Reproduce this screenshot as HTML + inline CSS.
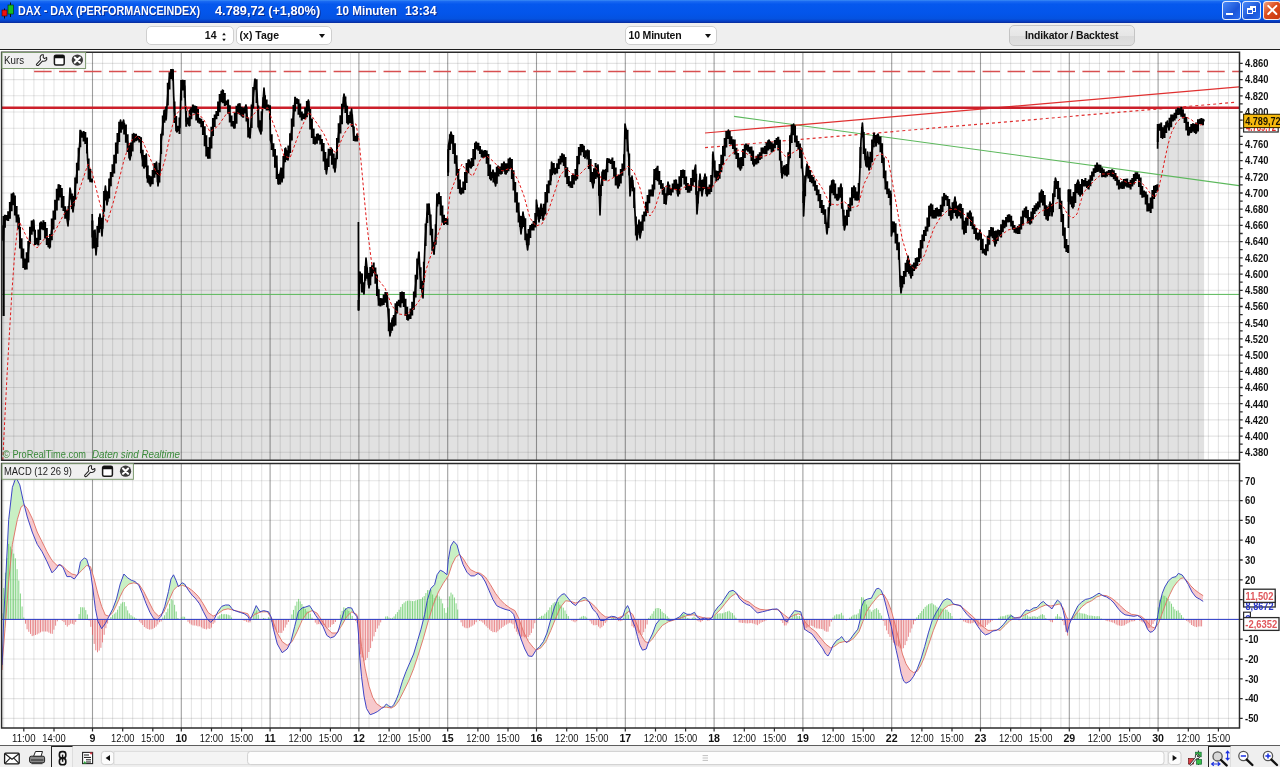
<!DOCTYPE html>
<html lang="de"><head><meta charset="utf-8"><title>DAX - DAX (PERFORMANCEINDEX)</title>
<style>
html,body{margin:0;padding:0;}
body{width:1280px;height:767px;overflow:hidden;background:#fff;position:relative;font-family:"Liberation Sans",Arial,sans-serif;}
#title{will-change:transform;position:absolute;left:0;top:0;width:1280px;height:22.7px;background:linear-gradient(#3b8df6 0,#1a6af2 6%,#0558ee 18%,#0355ea 60%,#0452e0 82%,#063cc0 93%,#0a2a98 100%);}
#title span{position:absolute;top:2.5px;color:#fff;font-weight:bold;font-size:12.4px;line-height:16px;white-space:nowrap;text-shadow:1px 1px 0 #0a2a90;transform-origin:0 50%;}
.wb{position:absolute;top:1.2px;width:18.4px;height:18.5px;border-radius:3.5px;border:1.1px solid rgba(255,255,255,.88);box-sizing:border-box;background:linear-gradient(135deg,#4a8af8,#1c55d8 60%,#2a6cf0);}
#tool{position:absolute;left:0;top:22.7px;width:1280px;height:26.1px;background:#efefef;}
#tline{position:absolute;left:0;top:48.7px;width:1280px;height:1.5px;background:#1c1c1c;}
.fld{will-change:transform;position:absolute;top:26px;height:19.4px;box-sizing:border-box;border:1px solid #cfcfcf;border-radius:5px;background:#fff;font-weight:bold;font-size:10.5px;line-height:17.5px;color:#111;white-space:nowrap;}
.fld i{position:absolute;width:0;height:0;border-left:3.6px solid transparent;border-right:3.6px solid transparent;border-top:4.4px solid #111;top:7px;}
#btn{will-change:transform;position:absolute;left:1009px;top:25px;width:125.5px;height:21.4px;box-sizing:border-box;border:1px solid #c4c4c4;border-radius:5px;background:linear-gradient(#ececec 0,#e6e6e6 50%,#dadada 52%,#e0e0e0 100%);font-weight:bold;font-size:10.4px;letter-spacing:-0.13px;line-height:19px;text-align:center;color:#111;}
#bot{position:absolute;left:0;top:745.2px;width:1280px;height:21.8px;background:#efefef;border-top:1.5px solid #5e5e5e;box-sizing:border-box;}
.pressed{position:absolute;top:746px;height:21px;box-sizing:border-box;border-left:1.6px solid #222;border-top:1.6px solid #222;border-right:1px solid #ddd;background:#f2f2f2;}
</style></head><body>
<div id="title">
<svg width="18" height="22" style="position:absolute;left:0;top:0"><path d="M4.5 8.5v10M10.5 2.5v14.5" stroke="#111" stroke-width="1"/><rect x="2" y="10" width="5" height="6" fill="#f01010" stroke="#400" stroke-width=".6"/><rect x="8" y="5" width="5.4" height="9" fill="#18c020" stroke="#030" stroke-width=".6"/></svg>
<span id="t1" style="left:18px;transform:scaleX(0.8668)">DAX - DAX (PERFORMANCEINDEX)</span>
<span id="t2" style="left:214.8px;transform:scaleX(1.0283)">4.789,72 (+1,80%)</span>
<span id="t3" style="left:336.3px;transform:scaleX(0.9410)">10 Minuten</span>
<span id="t4" style="left:405.3px;transform:scaleX(0.9937)">13:34</span>
<div class="wb" style="left:1222.2px"><div style="position:absolute;left:3px;top:10.4px;width:7px;height:2.7px;background:#fff"></div></div>
<div class="wb" style="left:1242.2px"><div style="position:absolute;left:6.8px;top:3.4px;width:6.2px;height:6.2px;border:1.2px solid #fff;border-top-width:2px;box-sizing:border-box"></div><div style="position:absolute;left:3.7px;top:6.2px;width:6.4px;height:6px;border:1.2px solid #fff;border-top-width:2px;box-sizing:border-box;background:#2a5fe0"></div></div>
<div class="wb" style="left:1262.8px;background:linear-gradient(135deg,#f0a080,#dc4c1c 45%,#c83810)"><svg width="17" height="17" style="position:absolute;left:0;top:0"><path d="M4.2 3.9L12.4 12M12.4 3.9L4.2 12" stroke="#fff" stroke-width="2" stroke-linecap="round"/></svg></div>
</div>
<div id="tool"></div>
<div class="fld" style="left:146.3px;width:88px"><span style="position:absolute;right:16.5px;top:0">14</span><svg width="8" height="14" style="position:absolute;right:5.5px;top:2.5px"><path d="M2.2 5.2L4 2.8L5.8 5.2zM2.2 8.8L4 11.2L5.8 8.8z" fill="#111"/></svg></div>
<div class="fld" style="left:235.7px;width:95.5px"><span style="position:absolute;left:2.6px;top:0">(x) Tage</span><i style="left:82px"></i></div>
<div class="fld" style="left:624.5px;width:92px"><span style="position:absolute;left:2.6px;top:0;letter-spacing:-0.2px">10 Minuten</span><i style="left:78.5px"></i></div>
<div id="btn">Indikator / Backtest</div>
<div id="tline"></div>
<svg width="1280" height="767" viewBox="0 0 1280 767" style="position:absolute;left:0;top:0;will-change:transform"><path d="M3 460.2 L3 240 L4 218 L9 218 L11 204 L13.4 193 L15 206 L17 220 L19 218 L20 240 L23 256 L25 269 L28 256 L30 234 L33.6 220 L35 240 L38 244 L41 222 L45 228 L47 240 L49.6 248 L52.4 224 L55 212 L59 185 L61 190 L63 206 L66 212 L68 226 L70 188 L73 212 L76 180 L78.5 160 L80.6 131 L84.5 136.7 L86.9 141.4 L87.6 160 L90 180 L92 180 L92.2 214 L92.6 248 L95 230 L96 255 L98 230 L100 214 L102 236 L104 202 L105.4 186 L107 205 L109 190 L111 175 L113 172 L115.8 153.9 L118.9 135 L120.5 120 L122 129 L123.6 120 L125.2 132 L127.5 141.4 L130 160 L133.8 133.5 L136 138 L140.8 138 L141.6 154 L144 168 L146.3 154 L147 178 L148.7 176 L150.4 186 L154 172 L156.5 162 L158 186 L160 170 L161.2 141.4 L164.3 110 L166 120 L168.2 88.2 L169.8 75.6 L172.9 69.7 L173.7 96 L174.5 111.6 L176.8 132 L180 127.3 L180.8 92.9 L182.8 80.3 L184.7 86.6 L185.4 105.4 L186.2 121 L189.4 125.7 L190 110 L196 108 L198 120 L202 122 L205 136 L208 158 L211 140 L214 120 L218 112 L220 100 L222.6 90 L225 104 L228 102 L230 118 L234 128 L237 110 L239 104 L242 116 L246 105 L248 126 L250 138 L252 110 L255 79 L257 94 L259 128 L261 134 L262.4 110 L264 88 L265.6 108 L268 108 L270 109 L270.4 140 L273 148 L276 160 L278.4 184 L281 168 L282 182 L284 160 L285.6 148 L288 160 L290 144 L292 128 L294 110 L295 100 L298 100 L300 114 L305 118 L308.4 100 L310 118 L312 130 L315 144 L318 134 L322 144 L324.4 154 L326.4 174 L329 152 L331 148 L333 160 L335 172 L337 148 L339 130 L342 116 L344 94 L346 106 L348 124 L350 120 L351.6 109 L353 126 L354 140 L357 138 L358 136 L358.4 222 L358.6 310 L360 272 L364 294 L366 258 L369 288 L372 266 L375 270 L377 284 L379 304 L383 301 L387 294 L388 310 L390 336 L392.4 318 L394 326 L397 302 L400 306 L402 292 L405 304 L408 320 L411 314 L414 302 L416 282 L419 252 L420 274 L423 298 L424 270 L425 244 L427 214 L429 204 L431 230 L434 254 L436 230 L437 194 L440 198 L442 214 L444 222 L447.6 222 L448 176 L448.4 146 L451 132 L454 148 L456 160 L458 178 L461 194 L464 188 L466 176 L469 160 L471 168 L474 156 L476 142 L479 148 L482 154 L487 154 L489 170 L491 180 L493 170 L495.6 186 L498 166 L501 174 L504 162 L506 174 L510 158 L512 170 L514 184 L517 204 L519 214 L521 234 L523 212 L525 228 L527.6 250 L530 228 L534 226 L536 224 L536.4 200 L539 222 L541 204 L543 220 L546 200 L548 186 L551 180 L551.6 162 L555 174 L558 166 L561 158 L564 156 L566 172 L569 184 L572 186 L573 174 L576 180 L578 160 L580 148 L583 146 L585 158 L587.6 150 L590 166 L593 188 L595 170 L598 165 L599 184 L600 215 L601 186 L603 170 L606 180 L607 160 L610 162 L612 160 L615 172 L618 188 L621 174 L623 168 L624 170 L625 124 L627 136 L629 160 L630 196 L632 176 L634 194 L635.6 224 L637 240 L639 220 L640 238 L643 218 L646 212 L648 200 L651 190 L653 196 L655 170 L657 168 L659 180 L662 186 L664 192 L666 204 L668 182 L670 194 L673 188 L676 180 L678 196 L681 176 L683 170 L685 180 L688 190 L690 190 L693 178 L695.6 165 L697 214 L699 188 L700 174 L702 196 L705 174 L707 196 L710 188 L712 186 L713 152 L715 176 L718 178 L721 166 L724 150 L726 140 L728.4 130 L731 144 L733 140 L735 150 L738 158 L740.4 170 L743 158 L746 144 L748 150 L751 148 L754 166 L757 158 L760 158 L763 148 L766 152 L769 140 L772 150 L775 144 L778 138 L780 150 L782 178 L784 166 L787 176 L789 158 L791 136 L793.6 124 L795 136 L798 146 L801 148 L803 176 L803.6 216 L805 186 L807 164 L810 178 L813 180 L816 188 L819 196 L822 208 L825 212 L827 234 L829 212 L831 186 L833 180 L835 194 L838 200 L841 184 L843 212 L844.4 230 L847 216 L850 206 L852 198 L854 186 L857 200 L859 192 L860 168 L861 140 L862.4 123 L864 146 L866 166 L867.6 152 L869 170 L871 160 L873 144 L874 133 L876 146 L878 134 L880 142 L882 150 L884 170 L886 186 L889 194 L891 194 L891.4 236 L894 222 L896 238 L899 250 L900 278 L901 293 L903 278 L905 274 L907 266 L908 256 L911 278 L913 266 L916 264 L919 258 L921 246 L923 238 L926 230 L928 226 L930 208 L931 204 L934 218 L937 208 L939 216 L942 208 L944.4 195 L947 198 L950 208 L951 220 L953 210 L955 197 L957 218 L960 204 L962 212 L964 234 L967 220 L970 211 L972 224 L975 230 L978 240 L980 230 L982 248 L985 254 L988 244 L990 232 L993 228 L995 246 L998 230 L1000 236 L1003 224 L1006 222 L1009 215 L1012 224 L1015 230 L1018 232 L1021 226 L1023 216 L1025.6 208 L1028 218 L1030 224 L1033 212 L1036 208 L1039 206 L1041.6 190 L1044 200 L1046 214 L1047.6 220 L1050 202 L1052 216 L1054 194 L1055.4 178 L1058 188 L1060 200 L1062 216 L1064 234 L1066 248 L1068 250 L1068.4 228 L1068.6 190 L1071 200 L1073 208 L1075 194 L1078 180 L1080 196 L1082 184 L1085 181 L1088 188 L1090 181 L1093.3 173 L1096.5 167 L1099.8 166 L1101.4 171.6 L1104.7 174.8 L1107.9 173.2 L1111.2 172.4 L1114.4 174.8 L1116.9 179.7 L1120.1 187.9 L1123.4 183.8 L1126.7 181.4 L1129.1 187.1 L1132.4 181.4 L1134.8 178.1 L1137.2 174.8 L1139.7 179.7 L1141.3 191.1 L1143 196 L1145.4 192.8 L1147 202.5 L1149 210.7 L1151.1 207.4 L1152.7 196 L1154.4 188.7 L1157.1 187.9 L1157.6 148.8 L1157.8 130 L1159.2 124.3 L1161.7 127.6 L1162.5 138.2 L1165 130.8 L1167.4 121 L1169 130 L1170.7 119.4 L1172.3 116.2 L1174.7 117.8 L1176.4 112.9 L1178.8 109.7 L1181.2 111.3 L1183.7 115.4 L1185.3 119.4 L1186.9 124.3 L1188.9 134.9 L1191 127.6 L1193.5 126.8 L1195.9 133.3 L1197.5 124.3 L1200 119.4 L1202.4 124.3 L1204.1 119.4 L1204.1 460.2Z" fill="#e1e1e1"/>
<path d="M84.1 52.3V460.2M74.1 52.3V460.2M64 52.3V460.2M54 52.3V460.2M43.9 52.3V460.2M33.9 52.3V460.2M23.8 52.3V460.2M13.8 52.3V460.2M3.7 52.3V460.2M102.6 52.3V460.2M112.6 52.3V460.2M122.7 52.3V460.2M132.7 52.3V460.2M142.8 52.3V460.2M152.8 52.3V460.2M162.9 52.3V460.2M172.9 52.3V460.2M191.4 52.3V460.2M201.4 52.3V460.2M211.5 52.3V460.2M221.5 52.3V460.2M231.6 52.3V460.2M241.6 52.3V460.2M251.7 52.3V460.2M261.7 52.3V460.2M280.2 52.3V460.2M290.2 52.3V460.2M300.3 52.3V460.2M310.3 52.3V460.2M320.4 52.3V460.2M330.4 52.3V460.2M340.5 52.3V460.2M350.5 52.3V460.2M369 52.3V460.2M379 52.3V460.2M389.1 52.3V460.2M399.1 52.3V460.2M409.2 52.3V460.2M419.2 52.3V460.2M429.3 52.3V460.2M439.3 52.3V460.2M457.8 52.3V460.2M467.8 52.3V460.2M477.9 52.3V460.2M487.9 52.3V460.2M498 52.3V460.2M508 52.3V460.2M518.1 52.3V460.2M528.1 52.3V460.2M546.6 52.3V460.2M556.6 52.3V460.2M566.7 52.3V460.2M576.7 52.3V460.2M586.8 52.3V460.2M596.8 52.3V460.2M606.9 52.3V460.2M616.9 52.3V460.2M635.4 52.3V460.2M645.4 52.3V460.2M655.5 52.3V460.2M665.5 52.3V460.2M675.6 52.3V460.2M685.6 52.3V460.2M695.7 52.3V460.2M705.7 52.3V460.2M724.2 52.3V460.2M734.2 52.3V460.2M744.3 52.3V460.2M754.3 52.3V460.2M764.4 52.3V460.2M774.4 52.3V460.2M784.5 52.3V460.2M794.5 52.3V460.2M813 52.3V460.2M823 52.3V460.2M833.1 52.3V460.2M843.1 52.3V460.2M853.2 52.3V460.2M863.2 52.3V460.2M873.3 52.3V460.2M883.3 52.3V460.2M901.8 52.3V460.2M911.8 52.3V460.2M921.9 52.3V460.2M931.9 52.3V460.2M942 52.3V460.2M952 52.3V460.2M962.1 52.3V460.2M972.1 52.3V460.2M990.6 52.3V460.2M1000.6 52.3V460.2M1010.7 52.3V460.2M1020.7 52.3V460.2M1030.8 52.3V460.2M1040.8 52.3V460.2M1050.9 52.3V460.2M1060.9 52.3V460.2M1079.4 52.3V460.2M1089.4 52.3V460.2M1099.5 52.3V460.2M1109.5 52.3V460.2M1119.6 52.3V460.2M1129.6 52.3V460.2M1139.7 52.3V460.2M1149.7 52.3V460.2M1168.2 52.3V460.2M1178.2 52.3V460.2M1188.3 52.3V460.2M1198.3 52.3V460.2M1208.4 52.3V460.2M1218.4 52.3V460.2M1228.5 52.3V460.2" stroke="#000" stroke-opacity="0.105" stroke-width="1.1" fill="none"/><path d="M92.5 52.3V460.2M181.3 52.3V460.2M270.1 52.3V460.2M358.9 52.3V460.2M447.7 52.3V460.2M536.5 52.3V460.2M625.3 52.3V460.2M714.1 52.3V460.2M802.9 52.3V460.2M891.7 52.3V460.2M980.5 52.3V460.2M1069.3 52.3V460.2M1158.1 52.3V460.2" stroke="#000" stroke-opacity="0.38" stroke-width="1.1" fill="none"/>
<path d="M84.1 463.4V728M74.1 463.4V728M64 463.4V728M54 463.4V728M43.9 463.4V728M33.9 463.4V728M23.8 463.4V728M13.8 463.4V728M3.7 463.4V728M102.6 463.4V728M112.6 463.4V728M122.7 463.4V728M132.7 463.4V728M142.8 463.4V728M152.8 463.4V728M162.9 463.4V728M172.9 463.4V728M191.4 463.4V728M201.4 463.4V728M211.5 463.4V728M221.5 463.4V728M231.6 463.4V728M241.6 463.4V728M251.7 463.4V728M261.7 463.4V728M280.2 463.4V728M290.2 463.4V728M300.3 463.4V728M310.3 463.4V728M320.4 463.4V728M330.4 463.4V728M340.5 463.4V728M350.5 463.4V728M369 463.4V728M379 463.4V728M389.1 463.4V728M399.1 463.4V728M409.2 463.4V728M419.2 463.4V728M429.3 463.4V728M439.3 463.4V728M457.8 463.4V728M467.8 463.4V728M477.9 463.4V728M487.9 463.4V728M498 463.4V728M508 463.4V728M518.1 463.4V728M528.1 463.4V728M546.6 463.4V728M556.6 463.4V728M566.7 463.4V728M576.7 463.4V728M586.8 463.4V728M596.8 463.4V728M606.9 463.4V728M616.9 463.4V728M635.4 463.4V728M645.4 463.4V728M655.5 463.4V728M665.5 463.4V728M675.6 463.4V728M685.6 463.4V728M695.7 463.4V728M705.7 463.4V728M724.2 463.4V728M734.2 463.4V728M744.3 463.4V728M754.3 463.4V728M764.4 463.4V728M774.4 463.4V728M784.5 463.4V728M794.5 463.4V728M813 463.4V728M823 463.4V728M833.1 463.4V728M843.1 463.4V728M853.2 463.4V728M863.2 463.4V728M873.3 463.4V728M883.3 463.4V728M901.8 463.4V728M911.8 463.4V728M921.9 463.4V728M931.9 463.4V728M942 463.4V728M952 463.4V728M962.1 463.4V728M972.1 463.4V728M990.6 463.4V728M1000.6 463.4V728M1010.7 463.4V728M1020.7 463.4V728M1030.8 463.4V728M1040.8 463.4V728M1050.9 463.4V728M1060.9 463.4V728M1079.4 463.4V728M1089.4 463.4V728M1099.5 463.4V728M1109.5 463.4V728M1119.6 463.4V728M1129.6 463.4V728M1139.7 463.4V728M1149.7 463.4V728M1168.2 463.4V728M1178.2 463.4V728M1188.3 463.4V728M1198.3 463.4V728M1208.4 463.4V728M1218.4 463.4V728M1228.5 463.4V728" stroke="#000" stroke-opacity="0.105" stroke-width="1.1" fill="none"/><path d="M92.5 463.4V728M181.3 463.4V728M270.1 463.4V728M358.9 463.4V728M447.7 463.4V728M536.5 463.4V728M625.3 463.4V728M714.1 463.4V728M802.9 463.4V728M891.7 463.4V728M980.5 463.4V728M1069.3 463.4V728M1158.1 463.4V728" stroke="#000" stroke-opacity="0.38" stroke-width="1.1" fill="none"/>
<path d="M1.6 452.3H1239.5M1.6 436.1H1239.5M1.6 419.9H1239.5M1.6 403.7H1239.5M1.6 387.5H1239.5M1.6 371.3H1239.5M1.6 355.1H1239.5M1.6 338.9H1239.5M1.6 322.7H1239.5M1.6 306.5H1239.5M1.6 290.3H1239.5M1.6 274.1H1239.5M1.6 257.8H1239.5M1.6 241.6H1239.5M1.6 225.4H1239.5M1.6 209.2H1239.5M1.6 193H1239.5M1.6 176.8H1239.5M1.6 160.6H1239.5M1.6 144.4H1239.5M1.6 128.2H1239.5M1.6 112H1239.5M1.6 95.8H1239.5M1.6 79.6H1239.5M1.6 63.4H1239.5" stroke="#000" stroke-opacity="0.105" stroke-width="1.1" fill="none"/>
<path d="M1.6 718.4H1239.5M1.6 698.6H1239.5M1.6 678.8H1239.5M1.6 659H1239.5M1.6 639.2H1239.5M1.6 619.4H1239.5M1.6 599.6H1239.5M1.6 579.8H1239.5M1.6 560H1239.5M1.6 540.2H1239.5M1.6 520.4H1239.5M1.6 500.6H1239.5M1.6 480.8H1239.5" stroke="#000" stroke-opacity="0.105" stroke-width="1.1" fill="none"/>
<path d="M1.6 294.4H1239.5" stroke="#58b858" stroke-width="1"/>
<path d="M34.1 71.5H1239.5" stroke="#d84f50" stroke-width="1.3" stroke-dasharray="17.5 7.46"/>
<path d="M734 116.4L1239 185.6" stroke="#5cb85c" stroke-width="1.1"/>
<path d="M705 133L1239 86.8" stroke="#e03030" stroke-width="1.2"/>
<path d="M705 147.6L1237 102.2" stroke="#e03030" stroke-width="1.2" stroke-dasharray="3 3"/>
<path d="M1.6 107.7H1239.5" stroke="#cc1f2a" stroke-width="2.4"/>
<path d="M3.2 225.2V240.7M4.9 214.8V227.8M6.6 215.1V220.5M8.2 211.2V220.9M9.9 202V218.7M11.6 193.4V211.2M13.3 193.3V205.3M14.9 195.5V215.6M16.6 206.1V222.4M18.3 214.5V229.3M20 227V248.5M21.6 238.3V258.5M23.3 248.6V267.9M25 258.5V269.3M26.7 252.2V269.6M28.3 241.1V262.5M30 226.8V243.7M31.7 220.5V234.7M33.4 220.5V231.6M35 229.7V244.9M36.7 237.8V244.6M38.4 229.6V245.4M40.1 222.4V239.9M41.7 222.7V229.6M43.4 220.2V230.3M45.1 222.1V238.4M46.8 227.9V245.1M48.4 237.9V247.2M50.1 233.9V247.5M51.8 218.4V240.3M53.5 210.4V229.5M55.1 199.7V219.8M56.8 188.7V210.5M58.5 184.3V200.4M60.2 185.1V197.4M61.8 187.9V207.7M63.5 196V211.1M65.2 206.3V218.8M66.9 209.7V218.5M68.5 206V220.3M70.2 189.4V199.6M71.9 193.4V208.9M73.6 196V206.3M75.2 177.5V199.8M76.9 162.8V183.4M78.6 147.7V170.5M80.3 129.8V147.3M81.9 132.6V137.7M83.6 131V141.5M85.3 132V144.1M87 137.6V153.5M88.6 158.6V179.6M90.3 168.9V182.3M92 178.4V182.6M92.4 220.5V237.6M94.1 230.3V248.3M95.8 237.9V249.2M97.4 225.9V246.9M99.1 217.3V232.7M100.8 217.7V229M102.5 217.7V228.7M104.1 190.9V211.7M105.8 190.4V200.6M107.5 191.3V201.8M109.2 178.4V198.6M110.8 172V186.3M112.5 164.2V177M114.2 154.7V173.4M115.9 142.6V163.5M117.5 133.1V153.8M119.2 121.8V142M120.9 121.9V132.8M122.6 121.6V128.7M124.2 122.9V134.6M125.9 124.4V142.7M127.6 134.2V152M129.3 144.8V158.5M130.9 142.6V156.3M132.6 133.8V151.5M134.3 134.1V142.5M136 133.8V141.3M137.6 135.7V140.5M139.3 136V142.5M141 137.3V153.3M142.7 149.8V166.6M144.3 155V166.3M146 155.3V167.3M147.7 165.5V182.8M149.4 175.6V184.2M151 176.3V183.9M152.7 170.1V184.2M154.4 163V177.7M156.1 163.3V174.4M157.7 170V182.3M159.4 162.7V182.6M161.1 133.8V154.1M162.8 115.4V135.6M164.4 110.5V122.7M166.1 106.6V118.7M167.8 82.8V105.6M169.5 72.3V89.4M171.1 69.1V78.9M172.8 69.4V80.6M174.5 101.5V123.1M176.2 116V131.2M177.8 125.7V130.9M179.5 117.4V133.9M181.2 79.9V100.4M182.9 80.2V90.4M184.6 79.9V97.7M186.2 111.1V126.7M187.9 117.5V123.9M189.6 110.6V126M191.3 107.2V119.2M192.9 104.5V112.7M194.6 105.5V113.4M196.3 106V120.4M198 109V122.7M199.6 117.7V123.8M201.3 118.8V127.3M203 121V135.1M204.7 126.2V146.3M206.3 135.3V156.5M208 146.9V158.4M209.7 137.3V158.7M211.4 126.8V148.5M213 117.9V136.1M214.7 114.5V126.9M216.4 110.9V119.3M218.1 101.6V115.9M219.7 93.9V112.3M221.4 90.8V102.3M223.1 89.9V103.3M224.8 92.9V106M226.4 100.5V105.3M228.1 99.4V113.8M229.8 105.3V122.4M231.5 115.6V126.5M233.1 121V126.2M234.8 112.4V128.6M236.5 105.8V123.8M238.2 103.7V113.8M239.8 103.3V114.8M241.5 106.7V116.3M243.2 107.4V117.8M244.9 107.7V113.4M246.5 106.7V121.4M248.2 117.5V137.5M249.9 127.6V137.8M251.6 104.5V127.9M253.2 87.1V108.5M254.9 79.4V89.8M256.6 79.2V103M258.3 105.5V127.6M259.9 120.2V131.2M261.6 111.3V131.5M263.3 97.3V108.3M265 95.3V108.7M266.6 99.6V110.5M268.3 104.6V110.5M270 105.3V119.7M271.7 134.3V150.1M273.4 143.2V156.8M275 149V167.7M276.7 155.4V179M278.4 173.9V184.2M280.1 173.4V184.5M281.7 167.9V178.6M283.4 155.9V178.4M285.1 148.3V162.2M286.8 150.3V159.9M288.4 145.5V157M290.1 133.3V152.9M291.8 118.4V140.4M293.5 105.1V126.8M295.1 96.8V111.6M296.8 98.2V104.1M298.5 99.3V114.8M300.2 103.4V117.6M301.8 111.4V120.5M303.5 113.5V118.9M305.2 107.5V119.2M306.9 101V117.3M308.5 101.1V111.6M310.2 108.9V129.6M311.9 118.6V138M313.6 128.6V143.9M315.2 136.6V143.6M316.9 133.7V143.7M318.6 135.1V140.4M320.3 134.8V144.5M321.9 139V151.2M323.6 143.1V161.4M325.3 152.1V169.9M327 158.6V169.6M328.6 148.7V167.1M330.3 149V155.7M332 148.7V164.7M333.7 153.4V168.6M335.3 158.1V168.3M337 138.1V159.3M338.7 123.2V142.8M340.4 115.3V133.5M342 103.7V124.3M343.7 96.7V107.3M345.4 96.4V113.1M347.1 105.7V123.2M348.7 114.9V122.9M350.4 111.4V123.2M352.1 114.6V127.1M353.8 126.5V141.1M355.4 135.7V141.6M357.1 133.6V141.6M358.6 299.9V310.4M360.3 273.1V283.8M362 273.5V292.6M363.6 282.2V292.3M365.3 266V280.7M367 267.4V278.7M368.7 273.1V284.9M370.3 266.9V285.2M372 265.6V276.4M373.7 262.4V273.2M375.4 267.5V283.7M377 274.6V296M378.7 289.2V305.8M380.4 298V306.6M382.1 298.2V305.6M383.7 294.5V305M385.4 292V302.8M387.1 292.3V307.2M388.8 308.6V331.2M390.4 322.6V333.1M392.1 319.8V330.7M393.8 315.1V325.3M395.5 303.3V325.5M397.1 301.8V313.5M398.8 299.8V306M400.5 291.9V307.5M402.2 292.2V303.3M403.8 291.9V307M405.5 298.7V316.1M407.2 306.7V320M408.9 314.2V318.7M410.5 308.4V319M412.2 301.7V315.6M413.9 291.6V309.8M415.6 274.8V297.5M417.2 258.4V279.4M418.9 252.4V263.1M420.6 267.3V289.1M422.3 281.1V292.5M423.9 261.8V281.9M425.6 223.4V246M427.3 203.5V222.9M429 203.8V214.9M430.6 214.6V235.3M432.3 228.7V250.7M434 241.9V254.4M435.7 224.3V244.7M437.3 194.1V206.5M439 192.2V204.3M440.7 196V215.5M442.4 205.4V222.7M444 214.8V224.9M445.7 218V223.9M447.4 218.3V224.9M448.2 149.2V172.4M449.9 134.2V149.9M451.6 134.5V143.7M453.2 135.1V154.1M454.9 143.2V163.8M456.6 155.2V175.7M458.3 169V189M459.9 179.5V193.5M461.6 187.6V193.2M463.3 181.6V193.5M465 171.9V190.1M466.6 163V182.9M468.3 159.6V173.3M470 161.2V167.8M471.7 158V167.1M473.3 149V166.1M475 142.7V159.4M476.7 143V149.6M478.4 142.7V150.8M480 146V154.1M481.7 149.4V157.5M483.4 150.4V157.9M485.1 150V157M486.7 150.6V163.7M488.4 153.9V176M490.1 164.6V179.2M491.8 172V177.9M493.4 172.3V182.6M495.1 172.2V183.4M496.8 166.7V183.7M498.5 166.8V176.6M500.1 166.5V174.1M501.8 163.3V174.1M503.5 163.6V171.4M505.2 163.3V174.2M506.8 163.2V172.8M508.5 158.5V171.3M510.2 158.8V169.1M511.9 159.1V179M513.5 170.3V190.6M515.2 181.9V202.4M516.9 192.3V212.5M518.6 202.6V222.5M520.2 215.8V226.9M521.9 216.1V228.4M523.6 216.4V227.1M525.3 218.3V240.2M526.9 233.6V244.9M528.6 228.9V245.2M530.3 224.9V238.1M532 223.7V230.4M533.6 221V230.6M535.3 212.9V227.5M537 204.7V216.5M538.7 207.4V219.7M540.4 209.4V219M542 207.7V216M543.7 203.7V215.7M545.4 192.1V214.4M547.1 184.3V202.6M548.7 180.5V193.3M550.4 169.2V185.2M552.1 163.3V175.2M553.8 163V173.6M555.4 167.7V173.3M557.1 163.2V173.6M558.8 158.7V169.1M560.5 155.8V164.6M562.1 153.2V162.4M563.8 154.2V165.9M565.5 157V177.3M567.2 167.2V184M568.8 175.9V186.3M570.5 181.3V187.8M572.2 175V188M573.9 175.3V184.5M575.5 168.9V179.5M577.2 155.9V179.2M578.9 146.9V164.3M580.6 143.9V155.4M582.2 143.9V152.2M583.9 145.8V156.9M585.6 150.3V156.6M587.3 150.6V159.6M588.9 150.3V169M590.6 158.9V182M592.3 171.9V183.2M594 168.2V183.5M595.6 163V179.1M597.3 165.7V177.6M599 173.5V195.8M600.7 184.8V196M602.3 171.6V185.9M604 170.1V179.7M605.7 169V179.4M607.4 158.1V172.3M609 158.5V163.1M610.7 159.5V164.1M612.4 157.5V169M614.1 160.9V176.7M615.7 167.6V185.6M617.4 175.7V185.3M619.1 174.4V186.2M620.8 169V183.6M622.4 163.6V175.8M624.1 154.2V170.2M625.8 128.4V139.3M627.5 129.7V151.6M629.2 153.4V175.6M630.8 177.2V188.1M632.5 180.1V191.2M634.2 187.6V208.1M635.9 216.4V235.4M637.5 224.6V235.1M639.2 223.3V233.3M640.9 221.5V232.5M642.6 214.8V230.7M644.2 211.5V221.6M645.9 201.8V216.2M647.6 195.1V212.9M649.3 189.5V203.2M650.9 189.8V196.5M652.6 184.6V195.2M654.3 168.9V189.6M656 168.6V180M657.6 165.7V181.3M659.3 171.1V184.7M661 179.9V188.7M662.7 183.3V194.7M664.3 187.3V204.1M666 193.2V204.3M667.7 185V195.5M669.4 184.7V195M671 187.9V195.5M672.7 183.6V192.6M674.4 179.8V189.3M676.1 180.1V190.3M677.7 183.8V194.3M679.4 176.3V194.2M681.1 170V186.7M682.8 170.3V177.9M684.4 170V184.4M686.1 176.5V190M687.8 183V192.7M689.5 184.7V192.7M691.1 178V190.7M692.8 169.8V186.1M694.5 170.1V182.2M696.2 173.7V194.8M697.8 191.3V203.4M699.5 180.3V191.2M701.2 180V191.2M702.9 179.4V190M704.5 176.9V189.1M706.2 176.6V194.3M707.9 186.7V194M709.6 184.4V194.3M711.2 175.1V191.9M712.9 154.2V164.4M714.6 160.4V177.6M716.3 170.5V181.6M718 171.1V180.3M719.6 163.9V178.7M721.3 154.8V172.2M723 146V165.1M724.7 137.9V156.2M726.3 131V147.4M728 131.3V139.1M729.7 131V144M731.4 136.2V143.7M733 139.8V149M734.7 139.6V154.4M736.4 147.8V159M738.1 153V167.4M739.7 157.6V168.7M741.4 156.9V168.5M743.1 149.1V166M744.8 144.6V157.9M746.4 144.9V150.6M748.1 144.6V151.8M749.8 146.8V153.7M751.5 146.6V161.1M753.1 150.4V164.5M754.8 158.7V164.2M756.5 155.8V164.5M758.2 154.2V163.2M759.8 152.3V160.1M761.5 147.6V158.7M763.2 147.9V153.7M764.9 146V154.1M766.5 142.4V154.2M768.2 140.3V150.5M769.9 141.3V149.3M771.6 142.3V152.4M773.2 143.5V151.5M774.9 140.1V148.2M776.6 137.9V144.9M778.3 136.7V150.4M779.9 139.8V160.5M781.6 161.1V173.1M783.3 167.3V174.1M785 165.3V175.5M786.6 164V175.2M788.3 152.2V174.7M790 135.2V158.2M791.7 124.5V142.9M793.3 124.8V135.3M795 125.5V142.4M796.7 135.4V146.9M798.4 141V149.7M800 143.6V157.9M801.7 148.2V168.4M803.4 191.3V203.1M805.1 175.5V196.2M806.8 166.3V176.4M808.4 166V178.5M810.1 170V181.9M811.8 175.1V183.2M813.5 176.9V186.4M815.1 180.5V190.8M816.8 185V195.3M818.5 189.4V201.3M820.2 193.9V208M821.8 199.9V213M823.5 205.1V214.7M825.2 209.3V223.9M826.9 222.5V232.8M828.5 207.3V227.9M830.2 185.4V206M831.9 180.2V193.2M833.6 180V195.2M835.2 183.6V198.5M836.9 193.8V200.4M838.6 187.2V199.6M840.3 187.5V197.8M841.9 187.2V208.7M843.6 209.8V225.9M845.3 215.5V225.6M847 209.8V225.4M848.6 204V216.9M850.3 197.6V211.2M852 187.3V205.4M853.7 187.6V198.3M855.3 187.3V200.4M857 191.6V200.3M858.7 183.1V200.6M860.4 146.9V168.1M862 127V137.4M863.7 131.9V153.9M865.4 148.6V160.3M867.1 156.3V167.4M868.7 156.8V167.1M870.4 151.7V167.4M872.1 139.5V162.2M873.8 135.1V147.3M875.4 135V142.8M877.1 134.4V143.1M878.8 136.8V144.6M880.5 136.5V152.2M882.1 143.2V163M883.8 157.5V178.3M885.5 170.5V189.4M887.2 181.3V194.3M888.8 188.4V198M890.5 190.6V205.3M892.2 221.3V232.1M893.9 222.3V232.6M895.6 223.3V243.6M897.2 233.7V250.3M898.9 242.3V259.8M900.6 275.4V287.1M902.3 276V287.4M903.9 270.9V284.3M905.6 262.7V276.8M907.3 260V272M909 259.8V273.8M910.6 265.4V275.7M912.3 264.6V276M914 262.6V270.9M915.7 258.1V268.7M917.3 257.3V265.9M919 248.3V262M920.7 239.9V258.4M922.4 234.5V248.6M924 230.1V241.3M925.7 226.5V235.9M927.4 217.5V231.5M929.1 205.8V226.7M930.7 204.7V216.6M932.4 204.5V218.4M934.1 209.9V218.1M935.8 208.1V218.4M937.4 209.4V216.4M939.1 209.1V216.1M940.8 204.8V216.4M942.5 196.5V211.9M944.1 192.9V206.2M945.8 194.8V200.3M947.5 195.9V205.9M949.2 198.9V216M950.8 207.9V218.5M952.5 202.2V218.7M954.2 201.8V213.1M955.9 201.5V216.2M957.5 205.4V215.9M959.2 204.6V216.2M960.9 204V218.5M962.6 208V229.5M964.2 220.8V233.3M965.9 217.5V232.9M967.6 212.5V225.7M969.3 212.8V218.9M970.9 212.5V225.9M972.6 216.5V229.3M974.3 224.5V233.9M976 227.9V239.5M977.6 232.5V239.2M979.3 233V239.7M981 232.7V250.1M982.7 238.7V253.4M984.4 248.7V253.1M986 244.3V255.4M987.7 235.8V251.3M989.4 229.9V244.8M991.1 226.9V236.4M992.7 228V238.3M994.4 231V242.3M996.1 230.6V243.7M997.8 230.9V240.9M999.4 230.1V234.7M1001.1 224.2V237.4M1002.8 219.7V232.3M1004.5 220.2V228.3M1006.1 217.1V226.7M1007.8 214.8V222.4M1009.5 214.6V222.2M1011.2 215.7V226.4M1012.8 220.8V229.7M1014.5 225V232.8M1016.2 227.5V233.5M1017.9 226V234M1019.5 224.2V234M1021.2 216.6V229.6M1022.9 210.5V225.6M1024.6 208.2V217.3M1026.2 206.6V218.3M1027.9 210V223.5M1029.6 217V223.2M1031.3 211.5V223.5M1032.9 207.9V219.6M1034.6 205.3V213.9M1036.3 203.2V211.3M1038 201.4V209.6M1039.6 192.4V207.4M1041.3 191.3V202.8M1043 191V205.4M1044.7 195.1V216M1046.3 205.2V219.4M1048 206.4V220.5M1049.7 203.9V216.3M1051.4 203.6V212M1053 193.2V212.3M1054.7 181.1V197M1056.4 181.4V189.1M1058.1 181.1V199.2M1059.7 187.7V209M1061.4 200.8V222M1063.1 214.1V235.7M1064.8 227.6V248.3M1066.4 239.1V251.9M1068.1 244.9V252.9M1068.6 189.6V201.8M1070.3 189.3V204.5M1072 196.3V207.3M1073.6 192.1V207M1075.3 184.1V203M1077 182.8V193.3M1078.7 181.6V194.7M1080.3 184V194.4M1082 179.1V194.7M1083.7 180V186.4M1085.4 178V186.4M1087 181.1V188.1M1088.7 179.4V189.4M1090.4 175.3V186.2M1092.1 171.5V180.8M1093.7 168.3V176.7M1095.4 164.8V172.9M1097.1 162.4V172M1098.8 164.5V171.8M1100.4 164.8V173M1102.1 167.5V177.2M1103.8 169.2V177M1105.5 171.7V177.6M1107.1 171.2V176.4M1108.8 170.1V175.1M1110.5 170V176.6M1112.2 169.3V177M1113.8 170.2V179.2M1115.5 172.9V181.1M1117.2 176.3V185.4M1118.9 179.7V189.5M1120.5 182.2V187.8M1122.2 181.2V189.1M1123.9 179.1V188.7M1125.6 178.7V186.5M1127.2 178.6V187.4M1128.9 182V187.1M1130.6 179.8V189.4M1132.3 177.9V186.6M1133.9 173.9V184.5M1135.6 172.2V181M1137.3 172.3V179M1139 174.3V187.1M1140.6 177.6V194.7M1142.3 185.9V197.8M1144 190.6V197.2M1145.7 191.6V204.6M1147.3 194.6V211.4M1149 203.3V211.1M1150.7 197.6V213M1152.4 190V208.7M1154 185.7V199M1155.7 185.1V193M1157.4 184.2V191.1M1157.8 124V142M1159.5 124.3V130.7M1161.2 122.5V137.9M1162.8 127.3V137.6M1164.5 125.3V137.9M1166.2 121.8V133M1167.9 123.1V127.4M1169.5 117.7V127.1M1171.2 114.5V127.3M1172.9 114.4V121.5M1174.6 112.7V120.6M1176.2 109.2V118.4M1177.9 107.8V115M1179.6 108.3V114.7M1181.3 106.8V116.8M1182.9 109.2V118.4M1184.6 113.4V123.1M1186.3 117V130.6M1188 121.7V135.5M1189.6 126.8V132.7M1191.3 124.1V133M1193 123.3V131.8M1194.7 123.8V132.9M1196.3 122.6V133.1M1198 119.3V131.4M1199.7 119.6V124M1201.4 118.1V124.6M1203 118.7V125.3" stroke="#000" stroke-width="2.05" fill="none"/>
<path d="M3 240 L4 218 L9 218 L11 204 L13.4 193 L15 206 L17 220 L19 218 L20 240 L23 256 L25 269 L28 256 L30 234 L33.6 220 L35 240 L38 244 L41 222 L45 228 L47 240 L49.6 248 L52.4 224 L55 212 L59 185 L61 190 L63 206 L66 212 L68 226 L70 188 L73 212 L76 180 L78.5 160 L80.6 131 L84.5 136.7 L86.9 141.4 L87.6 160 L90 180 L92 180 M92.2 214 L92.6 248 L95 230 L96 255 L98 230 L100 214 L102 236 L104 202 L105.4 186 L107 205 L109 190 L111 175 L113 172 L115.8 153.9 L118.9 135 L120.5 120 L122 129 L123.6 120 L125.2 132 L127.5 141.4 L130 160 L133.8 133.5 L136 138 L140.8 138 L141.6 154 L144 168 L146.3 154 L147 178 L148.7 176 L150.4 186 L154 172 L156.5 162 L158 186 L160 170 L161.2 141.4 L164.3 110 L166 120 L168.2 88.2 L169.8 75.6 L172.9 69.7 L173.7 96 L174.5 111.6 L176.8 132 L180 127.3 L180.8 92.9 L182.8 80.3 L184.7 86.6 L185.4 105.4 L186.2 121 L189.4 125.7 L190 110 L196 108 L198 120 L202 122 L205 136 L208 158 L211 140 L214 120 L218 112 L220 100 L222.6 90 L225 104 L228 102 L230 118 L234 128 L237 110 L239 104 L242 116 L246 105 L248 126 L250 138 L252 110 L255 79 L257 94 L259 128 L261 134 L262.4 110 L264 88 L265.6 108 L268 108 L270 109 L270.4 140 L273 148 L276 160 L278.4 184 L281 168 L282 182 L284 160 L285.6 148 L288 160 L290 144 L292 128 L294 110 L295 100 L298 100 L300 114 L305 118 L308.4 100 L310 118 L312 130 L315 144 L318 134 L322 144 L324.4 154 L326.4 174 L329 152 L331 148 L333 160 L335 172 L337 148 L339 130 L342 116 L344 94 L346 106 L348 124 L350 120 L351.6 109 L353 126 L354 140 L357 138 L358 136 M358.4 222 L358.6 310 L360 272 L364 294 L366 258 L369 288 L372 266 L375 270 L377 284 L379 304 L383 301 L387 294 L388 310 L390 336 L392.4 318 L394 326 L397 302 L400 306 L402 292 L405 304 L408 320 L411 314 L414 302 L416 282 L419 252 L420 274 L423 298 L424 270 L425 244 L427 214 L429 204 L431 230 L434 254 L436 230 L437 194 L440 198 L442 214 L444 222 L447.6 222 M448 176 L448.4 146 L451 132 L454 148 L456 160 L458 178 L461 194 L464 188 L466 176 L469 160 L471 168 L474 156 L476 142 L479 148 L482 154 L487 154 L489 170 L491 180 L493 170 L495.6 186 L498 166 L501 174 L504 162 L506 174 L510 158 L512 170 L514 184 L517 204 L519 214 L521 234 L523 212 L525 228 L527.6 250 L530 228 L534 226 L536 224 L536.4 200 L539 222 L541 204 L543 220 L546 200 L548 186 L551 180 L551.6 162 L555 174 L558 166 L561 158 L564 156 L566 172 L569 184 L572 186 L573 174 L576 180 L578 160 L580 148 L583 146 L585 158 L587.6 150 L590 166 L593 188 L595 170 L598 165 L599 184 L600 215 L601 186 L603 170 L606 180 L607 160 L610 162 L612 160 L615 172 L618 188 L621 174 L623 168 L624 170 L625 124 L627 136 L629 160 L630 196 L632 176 L634 194 L635.6 224 L637 240 L639 220 L640 238 L643 218 L646 212 L648 200 L651 190 L653 196 L655 170 L657 168 L659 180 L662 186 L664 192 L666 204 L668 182 L670 194 L673 188 L676 180 L678 196 L681 176 L683 170 L685 180 L688 190 L690 190 L693 178 L695.6 165 L697 214 L699 188 L700 174 L702 196 L705 174 L707 196 L710 188 L712 186 L713 152 L715 176 L718 178 L721 166 L724 150 L726 140 L728.4 130 L731 144 L733 140 L735 150 L738 158 L740.4 170 L743 158 L746 144 L748 150 L751 148 L754 166 L757 158 L760 158 L763 148 L766 152 L769 140 L772 150 L775 144 L778 138 L780 150 L782 178 L784 166 L787 176 L789 158 L791 136 L793.6 124 L795 136 L798 146 L801 148 L803 176 L803.6 216 L805 186 L807 164 L810 178 L813 180 L816 188 L819 196 L822 208 L825 212 L827 234 L829 212 L831 186 L833 180 L835 194 L838 200 L841 184 L843 212 L844.4 230 L847 216 L850 206 L852 198 L854 186 L857 200 L859 192 L860 168 L861 140 L862.4 123 L864 146 L866 166 L867.6 152 L869 170 L871 160 L873 144 L874 133 L876 146 L878 134 L880 142 L882 150 L884 170 L886 186 L889 194 L891 194 L891.4 236 L894 222 L896 238 L899 250 L900 278 L901 293 L903 278 L905 274 L907 266 L908 256 L911 278 L913 266 L916 264 L919 258 L921 246 L923 238 L926 230 L928 226 L930 208 L931 204 L934 218 L937 208 L939 216 L942 208 L944.4 195 L947 198 L950 208 L951 220 L953 210 L955 197 L957 218 L960 204 L962 212 L964 234 L967 220 L970 211 L972 224 L975 230 L978 240 L980 230 L982 248 L985 254 L988 244 L990 232 L993 228 L995 246 L998 230 L1000 236 L1003 224 L1006 222 L1009 215 L1012 224 L1015 230 L1018 232 L1021 226 L1023 216 L1025.6 208 L1028 218 L1030 224 L1033 212 L1036 208 L1039 206 L1041.6 190 L1044 200 L1046 214 L1047.6 220 L1050 202 L1052 216 L1054 194 L1055.4 178 L1058 188 L1060 200 L1062 216 L1064 234 L1066 248 L1068 250 M1068.4 228 L1068.6 190 L1071 200 L1073 208 L1075 194 L1078 180 L1080 196 L1082 184 L1085 181 L1088 188 L1090 181 L1093.3 173 L1096.5 167 L1099.8 166 L1101.4 171.6 L1104.7 174.8 L1107.9 173.2 L1111.2 172.4 L1114.4 174.8 L1116.9 179.7 L1120.1 187.9 L1123.4 183.8 L1126.7 181.4 L1129.1 187.1 L1132.4 181.4 L1134.8 178.1 L1137.2 174.8 L1139.7 179.7 L1141.3 191.1 L1143 196 L1145.4 192.8 L1147 202.5 L1149 210.7 L1151.1 207.4 L1152.7 196 L1154.4 188.7 L1157.1 187.9 M1157.6 148.8 L1157.8 130 L1159.2 124.3 L1161.7 127.6 L1162.5 138.2 L1165 130.8 L1167.4 121 L1169 130 L1170.7 119.4 L1172.3 116.2 L1174.7 117.8 L1176.4 112.9 L1178.8 109.7 L1181.2 111.3 L1183.7 115.4 L1185.3 119.4 L1186.9 124.3 L1188.9 134.9 L1191 127.6 L1193.5 126.8 L1195.9 133.3 L1197.5 124.3 L1200 119.4 L1202.4 124.3 L1204.1 119.4" stroke="#000" stroke-width="1.7" fill="none" stroke-linejoin="round"/>
<path d="M3.6 216V316" stroke="#000" stroke-width="2.2"/>
<path d="M2.8 460 L4.5 425 L7 376 L9.5 332 L12 291 L14.5 256 L17.5 228 L19.5 222 L28 240 L37 248 L46 237 L53 235 L64 214 L76 200 L88 164 L92 172 L100 204 L107 223 L114 200 L124 160 L130 142 L137 136 L143 142 L150 158 L156 172 L160 176 L165 160 L170 135 L175 116 L180 110 L186 106 L190 116 L198 113 L204 120 L210 132 L218 126 L227 113 L236 112 L250 119 L258 109 L268 108 L272 120 L278 136 L284 156 L290 158 L298 136 L304 122 L309 112 L316 122 L324 134 L330 148 L336 153 L344 134 L350 125 L356 124 L359 140 L362 172 L364.5 200 L367 226 L372 266 L377 278 L385 288 L392 306 L399 314 L406 315 L414 308 L421 298 L426 270 L434 246 L442 223 L447 221 L450 194 L456 178 L462 164 L467 172 L473 176 L480 160 L487 156 L494 162 L502 171 L511 168 L518 180 L524 196 L530 218 L536 226 L542 224 L548 212 L554 194 L560 176 L566 168 L572 174 L578 176 L584 170 L590 164 L596 168 L602 180 L608 181 L616 176 L623 172 L628 166 L634 172 L640 188 L645 208 L650 216 L655 208 L660 192 L666 186 L672 189 L680 190 L688 185 L698 187 L706 188 L712 188 L718 178 L725 162 L731 154 L738 150 L744 152 L752 157 L760 157 L769 155 L778 148 L786 157 L794 152 L801 148 L806 160 L814 176 L822 188 L830 204 L838 205 L844 201 L850 208 L858 206 L864 184 L870 172 L876 156 L882 154 L888 159 L892 180 L898 214 L902 238 L906 252 L910 264 L915 270 L920 264 L925 254 L929 242 L934 228 L940 218 L948 210 L956 209 L964 214 L972 222 L980 232 L987 238 L994 241 L1000 236 L1008 230 L1016 228 L1024 224 L1032 220 L1040 212 L1048 208 L1054 204 L1059 202 L1064 208 L1068 215 L1073 218 L1077 214 L1080 204 L1083 194 L1087 188 L1092 183 L1097 178 L1102 174 L1108 174 L1113 173 L1119 178 L1126 182 L1132 184 L1139 181 L1145 186 L1150 193 L1155 197.6 L1158.4 189.5 L1161.7 175 L1165 158.5 L1168.2 144 L1171.5 132.5 L1176.4 122.7 L1181.2 117.8 L1186.1 117 L1191 119.4 L1195.9 123.5 L1200.8 125 L1204 123.5" stroke="#e01818" stroke-width="1" fill="none" stroke-dasharray="2.8 2.2"/>
<path d="M2 665 L3 640.5 L4 612.7 L5 592.9 L6 573 L7 553.2 L8 533.4 L9 517 L10 508.3 L11 499.5 L12 490.8 L13 485.7 L14 482.9 L15 480.1 L16 477.4 L17 479.4 L18 481.3 L19 483.3 L20 485.8 L21 490.5 L22 495.2 L23 499.9 L24 504.1 L24 504.7 L23 505.5 L22 506.4 L21 507.2 L20 510.6 L19 513.9 L18 517.3 L17 521.1 L16 526.2 L15 531.2 L14 536.2 L13 541.3 L12 548.3 L11 558.4 L10 568.4 L9 578.5 L8 590.4 L7 603.1 L6 615.9 L5 628.6 L4 641.2 L3 653.7 L2 670ZM58 566 L59 564.7 L60 564.5 L60 565.4 L59 565.4 L58 565.4ZM77 575.4 L78 574 L79 569.1 L80 564.2 L81 561.2 L82 560.2 L83 559.3 L84 558.3 L85 558.4 L86 558.9 L87 560.2 L88 563.4 L88 565.8 L87 565.5 L86 566.1 L85 567.1 L84 568.2 L83 569.2 L82 570.2 L81 571.2 L80 572.2 L79 573.1 L78 574.1 L77 575.1ZM109 616.2 L110 614.3 L111 612.3 L112 610.4 L113 608.3 L114 605.6 L115 602.9 L116 600.2 L117 596.9 L118 592.9 L119 588.8 L120 584.8 L121 581.8 L122 579.1 L123 576.4 L124 574.1 L125 575.1 L126 576.2 L127 577.2 L128 578.1 L129 578.7 L130 579.4 L131 580 L132 580.5 L133 580.8 L134 581.2 L135 581.5 L136 582.5 L137 583.4 L137 583.6 L136 583.3 L135 583.1 L134 582.8 L133 583 L132 583.2 L131 583.5 L130 583.7 L129 584 L128 584.9 L127 585.9 L126 586.9 L125 587.9 L124 588.9 L123 590.8 L122 592.8 L121 594.8 L120 596.9 L119 599.2 L118 601.5 L117 603.8 L116 606 L115 608 L114 610.1 L113 612.1 L112 613.3 L111 614.3 L110 615.2 L109 616.2ZM162 613.8 L163 611.1 L164 608.4 L165 605.5 L166 601.5 L167 597.4 L168 593.4 L169 588.9 L170 584 L171 579 L172 577.3 L173 575.6 L174 575.9 L175 578.1 L176 580.3 L177 582.9 L178 585.5 L179 585.9 L180 584.9 L181 584 L182 583 L183 583.2 L184 583.7 L185 584.7 L186 586.3 L186 586.7 L185 586.3 L184 585.9 L183 585.5 L182 585.3 L181 585.5 L180 585.8 L179 586 L178 586.3 L177 586.7 L176 587.7 L175 588.7 L174 589.7 L173 591.3 L172 593.6 L171 595.8 L170 598 L169 600.3 L168 602.5 L167 604.8 L166 607.1 L165 609.3 L164 611.6 L163 612.9 L162 613.7ZM216 615.5 L217 613.5 L218 611.5 L219 610.1 L220 608.7 L221 607.4 L222 606.2 L223 605.9 L224 605.5 L225 605.2 L226 605 L227 605 L228 605 L229 605 L230 606.1 L231 607.4 L232 608.7 L232 609.8 L231 609.5 L230 609.3 L229 609 L228 608.8 L227 609 L226 609.3 L225 609.5 L224 609.8 L223 610 L222 610.8 L221 611.5 L220 612.3 L219 613 L218 613.8 L217 614.2 L216 614.8ZM251 618.1 L252 615.8 L253 613.4 L254 611.1 L255 608.6 L256 606.1 L257 606.9 L258 608.5 L259 610.2 L260 611.8 L261 611.5 L262 611.1 L263 610.8 L264 610.7 L265 610.9 L266 611.2 L267 611.4 L268 611.7 L269 612.6 L270 614.7 L271 616.8 L271 617.3 L270 615.8 L269 614.3 L268 612.8 L267 611.8 L266 611.8 L265 611.8 L264 611.8 L263 611.8 L262 611.8 L261 611.9 L260 612.3 L259 612.7 L258 613.1 L257 613.5 L256 613.9 L255 614.3 L254 615 L253 615.8 L252 616.5 L251 617.3ZM290 643.4 L291 641.2 L292 637.2 L293 633.1 L294 629.1 L295 625.1 L296 621.1 L297 617 L298 613 L299 611.1 L300 610.1 L301 609 L302 608 L303 607.7 L304 607.4 L305 607.1 L306 606.8 L307 606.5 L308 606.1 L309 605.8 L310 606.3 L311 607.8 L312 609.3 L313 611 L313 611.1 L312 610.6 L311 611.1 L310 611.6 L309 612 L308 612.5 L307 613 L306 614.5 L305 616 L304 617.5 L303 619 L302 620.5 L301 622.8 L300 625.1 L299 627.4 L298 629.6 L297 631.9 L296 633.9 L295 635.9 L294 637.8 L293 639.8 L292 641.7 L291 642.4 L290 643.2ZM338 631.7 L339 628.3 L340 625 L341 621.6 L342 618.3 L343 614.8 L344 611.3 L345 610 L346 609.1 L347 608.3 L348 607.6 L349 607.7 L350 607.8 L351 607.9 L352 608.8 L353 610.9 L353 612.5 L352 612 L351 612.4 L350 613.4 L349 614.5 L348 615.5 L347 616.5 L346 618 L345 619.8 L344 621.5 L343 623.2 L342 625 L341 626.5 L340 628 L339 629.5 L338 631ZM383 707.6 L384 706.9 L385 705.7 L386 704.4 L387 704.6 L388 705.4 L389 706.1 L390 706.6 L391 707.1 L392 706.5 L393 705.5 L394 704.2 L395 702.2 L396 700.2 L397 697.8 L398 695.3 L399 692.6 L400 689.2 L401 685.9 L402 682.5 L403 679.6 L404 676.9 L405 674.2 L406 671.6 L407 669.2 L408 666.9 L409 664.7 L410 662.4 L411 660 L412 657.7 L413 655.4 L414 652.7 L415 649.3 L416 646 L417 642.6 L418 639.3 L419 635.9 L420 632.6 L421 629.2 L422 625.2 L423 621.1 L424 617.1 L425 612.7 L426 607.2 L427 601.8 L428 598 L429 594.7 L430 591.3 L431 588.2 L432 587.2 L433 586.2 L434 585.2 L435 583 L436 579.1 L437 575.1 L438 573.4 L439 572 L440 570.6 L441 570.6 L442 571.1 L443 571.6 L444 572.3 L445 573.1 L446 573.9 L447 574.7 L448 563.2 L449 555.8 L450 550.2 L451 545.7 L452 544 L453 542.4 L454 541.5 L455 542.7 L456 543.8 L457 544.9 L458 548.5 L459 552.2 L459 554.6 L458 555.4 L457 556.2 L456 557.1 L455 558.7 L454 560.7 L453 562.7 L452 564.7 L451 567.7 L450 570.8 L449 573.8 L448 576.3 L447 577.8 L446 579.3 L445 580.8 L444 582.3 L443 583.8 L442 585.6 L441 587.4 L440 589.2 L439 590.9 L438 593 L437 595.5 L436 598 L435 600.4 L434 602.9 L433 605.7 L432 608.9 L431 612.1 L430 615.3 L429 618.6 L428 621.9 L427 625.5 L426 629 L425 632.6 L424 636.1 L423 639.5 L422 642.7 L421 646 L420 649.2 L419 652.4 L418 655.5 L417 658.5 L416 661.6 L415 664.6 L414 667.6 L413 670.3 L412 672.8 L411 675.2 L410 677.7 L409 680.2 L408 682.4 L407 684.5 L406 686.5 L405 688.5 L404 690.6 L403 692.6 L402 694.5 L401 696.5 L400 698.5 L399 700.4 L398 701.9 L397 703.3 L396 704.6 L395 706 L394 706.5 L393 707.1 L392 707.6 L391 708 L390 707.8 L389 707.6 L388 707.5 L387 707.3 L386 707.2 L385 707.2 L384 707.2 L383 707.2ZM536 650.2 L537 649.2 L538 648.2 L539 647.2 L540 646.1 L541 644.8 L542 643.5 L543 642.1 L544 640.2 L545 637.8 L546 635.4 L547 633 L548 629.4 L549 625.8 L550 622.2 L551 618.6 L552 615.3 L553 611.9 L554 608.6 L555 605.7 L556 603.4 L557 601 L558 598.7 L559 597.4 L560 596.4 L561 595.5 L562 594.5 L563 594.2 L564 593.8 L565 594.4 L566 595.6 L567 596.8 L568 598 L569 599.2 L570 600.5 L570 601.3 L569 601.2 L568 601 L567 600.9 L566 600.7 L565 601.6 L564 602.8 L563 604 L562 605.3 L561 606.5 L560 608.5 L559 610.8 L558 613 L557 615.3 L556 617.5 L555 620 L554 622.5 L553 624.9 L552 627.4 L551 629.9 L550 632.2 L549 634.4 L548 636.7 L547 638.9 L546 641.2 L545 642.6 L544 643.9 L543 645.1 L542 646.4 L541 647.7 L540 648.2 L539 648.7 L538 649.2 L537 649.7 L536 650.2ZM578 602.4 L579 601.1 L580 600.1 L581 599.3 L582 598.5 L583 597.7 L584 597.7 L585 597.7 L586 598.3 L587 599.4 L588 600.6 L588 601.2 L587 600.7 L586 600.2 L585 600.1 L584 600.4 L583 600.7 L582 601 L581 601.3 L580 601.6 L579 601.9 L578 602.2ZM609 617.4 L610 617 L611 616.5 L612 616.4 L613 616.5 L614 616.6 L615 616.8 L616 617.3 L616 617.9 L615 617.8 L614 617.7 L613 617.6 L612 617.5 L611 617.4 L610 617.3 L609 617.2ZM623 615.9 L624 612.9 L625 609.9 L626 608.1 L627 606.5 L628 606.4 L629 608.5 L630 611.9 L630 612.2 L629 611.4 L628 612.1 L627 612.9 L626 613.7 L625 614.6 L624 615.4 L623 615.9ZM648 643.7 L649 641 L650 638.9 L651 636.9 L652 634.8 L653 632.4 L654 629.6 L655 626.9 L656 624.2 L657 622.9 L658 621.7 L659 620.4 L660 619.3 L661 619.3 L662 619.3 L663 619.3 L664 619.3 L665 619.3 L666 619.6 L667 619.8 L668 620.1 L669 620.3 L670 620.5 L671 620.2 L672 620 L673 619.7 L674 619.5 L675 619.1 L676 618.6 L677 618.1 L678 617.6 L679 617.1 L680 616.4 L681 615.2 L682 614 L683 612.8 L684 612.6 L685 613.2 L686 613.7 L687 614.3 L688 614.3 L689 614.3 L690 614.3 L691 614.2 L692 613.7 L693 613.1 L694 612.6 L695 613.2 L696 615 L696 615.6 L695 615.3 L694 615 L693 614.8 L692 614.9 L691 615.1 L690 615.2 L689 615.3 L688 615.4 L687 615.5 L686 615.9 L685 616.3 L684 616.7 L683 617.1 L682 617.5 L681 618 L680 618.3 L679 618.6 L678 618.8 L677 619.1 L676 619.4 L675 619.7 L674 620 L673 620.3 L672 620.6 L671 620.9 L670 621.2 L669 621.5 L668 622 L667 622.6 L666 623.2 L665 623.8 L664 624.5 L663 625.1 L662 625.9 L661 627.1 L660 628.4 L659 629.7 L658 630.9 L657 632.3 L656 633.7 L655 635.2 L654 636.7 L653 638.1 L652 639.4 L651 640.4 L650 641.5 L649 642.5 L648 642.6ZM712 617.8 L713 615.3 L714 612.8 L715 611 L716 609.6 L717 608.3 L718 606.9 L719 605.9 L720 604.8 L721 603.8 L722 602.7 L723 601.1 L724 599.4 L725 597.8 L726 596.3 L727 594.8 L728 593.3 L729 591.8 L730 591.2 L731 590.9 L732 590.6 L733 590.3 L734 591.1 L735 591.9 L736 592.7 L737 593.8 L737 594.5 L736 594 L735 594 L734 594.6 L733 595.3 L732 596 L731 596.7 L730 597.6 L729 598.8 L728 600 L727 601.2 L726 602.4 L725 603.6 L724 604.9 L723 606.2 L722 607.5 L721 608.8 L720 609.9 L719 610.9 L718 611.9 L717 612.9 L716 613.9 L715 614.8 L714 615.5 L713 616.3 L712 617ZM772 609.4 L773 609.2 L774 609.2 L775 609.1 L776 609 L777 608.9 L778 609.7 L778 609.8 L777 609.7 L776 609.6 L775 609.5 L774 609.4 L773 609.4 L772 609.3ZM789 618.7 L790 617 L791 615.4 L792 614 L793 612.7 L794 611.4 L795 610.7 L796 610.9 L797 611.1 L798 611.2 L799 611.4 L800 611.6 L801 612.7 L801 615 L800 614.6 L799 614.1 L798 613.9 L797 614.3 L796 614.6 L795 614.9 L794 615.3 L793 615.7 L792 616.2 L791 616.7 L790 617.2 L789 617.7ZM832 647.8 L833 645.3 L834 643.9 L835 642.6 L836 641.2 L837 640.1 L838 639.6 L839 639.1 L840 638.2 L841 637.3 L842 637 L843 638.5 L844 640 L845 641.1 L845 641.6 L844 641.6 L843 641.9 L842 642.1 L841 642.4 L840 642.6 L839 643 L838 643.7 L837 644.5 L836 645.2 L835 646 L834 646.6 L833 646.9 L832 647.3ZM847 642.5 L848 641.5 L849 640.4 L850 639.4 L851 638.2 L852 636.8 L853 635.4 L854 634 L855 632.7 L856 631.5 L857 630.2 L858 628.4 L859 624.4 L860 620.5 L861 612.1 L862 605.7 L863 603.2 L864 600.7 L865 600.2 L866 599.8 L867 599.3 L868 598.9 L869 598.7 L870 598.5 L871 598.3 L872 597 L873 595 L874 593 L875 591.3 L876 589.5 L877 588.7 L878 588.5 L879 588.4 L880 589.4 L881 590.4 L882 592.4 L882 594.5 L881 594.5 L880 594.5 L879 595.5 L878 596.6 L877 597.6 L876 598.7 L875 599.9 L874 601.2 L873 602.4 L872 603.7 L871 605 L870 606.5 L869 608 L868 609.5 L867 611 L866 613.1 L865 615.8 L864 618.5 L863 621.2 L862 623.8 L861 626.4 L860 629.1 L859 631.7 L858 632.9 L857 634.2 L856 635.4 L855 636.7 L854 637.9 L853 638.6 L852 639.4 L851 640.1 L850 640.9 L849 641.6 L848 641.6 L847 641.6ZM915 673.5 L916 671.4 L917 669.4 L918 666.9 L919 664.3 L920 661.6 L921 659 L922 655.6 L923 652.2 L924 648.9 L925 645.4 L926 641.7 L927 638 L928 634.4 L929 630.9 L930 627.7 L931 624.4 L932 621.2 L933 618.9 L934 616.9 L935 614.8 L936 612.8 L937 611.2 L938 609.5 L939 607.9 L940 606.2 L941 604.6 L942 602.9 L943 601.2 L944 600.3 L945 599.8 L946 599.2 L947 598.7 L948 599.1 L949 599.4 L950 599.8 L951 600.5 L952 602 L953 603.6 L954 604.1 L955 604.4 L956 604.6 L956 604.7 L955 604.6 L954 604.5 L953 604.4 L952 604.7 L951 604.9 L950 605.2 L949 605.4 L948 605.8 L947 606.6 L946 607.3 L945 608 L944 608.8 L943 609.8 L942 611.6 L941 613.4 L940 615.2 L939 616.9 L938 619 L937 621.5 L936 624 L935 626.4 L934 628.9 L933 631.6 L932 634.6 L931 637.6 L930 640.5 L929 643.5 L928 646.5 L927 649.5 L926 652.5 L925 655.5 L924 658 L923 660.4 L922 662.7 L921 665 L920 666.7 L919 668.4 L918 670.1 L917 671.4 L916 671.7 L915 672ZM958 605.1 L959 605.3 L960 605.5 L961 606.1 L961 606.8 L960 606.1 L959 605.5 L958 605ZM997 630.1 L998 629.4 L999 628.7 L1000 628 L1001 627 L1002 625.9 L1003 624.9 L1004 623.8 L1005 622.5 L1006 621.2 L1007 619.8 L1008 618.7 L1009 617.6 L1010 616.6 L1011 615.5 L1012 616.1 L1013 616.8 L1014 617.4 L1014 618.5 L1013 619 L1012 619.5 L1011 620 L1010 620.5 L1009 621.5 L1008 622.5 L1007 623.5 L1006 624.5 L1005 625.5 L1004 626.5 L1003 627.5 L1002 628.4 L1001 629.4 L1000 630.4 L999 630.1 L998 629.8 L997 629.8ZM1020 617.7 L1021 616.4 L1022 615 L1023 613.7 L1024 612.4 L1025 611.2 L1026 610 L1027 610.2 L1028 610.3 L1029 610.5 L1030 610.4 L1031 609.7 L1032 609 L1033 608.3 L1034 607.9 L1035 607.7 L1036 607.6 L1037 607.4 L1038 606.3 L1039 605.1 L1040 604 L1041 602.9 L1042 602.3 L1043 601.7 L1044 602 L1045 603.1 L1046 604.1 L1047 604.8 L1047 605.2 L1046 605 L1045 605.3 L1044 605.7 L1043 606.1 L1042 606.5 L1041 606.9 L1040 607.4 L1039 608 L1038 608.6 L1037 609.2 L1036 609.8 L1035 610.2 L1034 610.6 L1033 611 L1032 611.4 L1031 611.8 L1030 612.3 L1029 612.8 L1028 613.3 L1027 613.8 L1026 614.3 L1025 614.8 L1024 615.3 L1023 615.8 L1022 616.3 L1021 616.8 L1020 617ZM1054 605.3 L1055 603.7 L1056 602.2 L1057 600.7 L1058 600.5 L1059 601.4 L1060 602.3 L1061 603.9 L1061 605.6 L1060 604.5 L1059 604 L1058 604.3 L1057 604.6 L1056 604.8 L1055 605.1 L1054 605.3ZM1071 620.2 L1072 617.8 L1073 615.7 L1074 613.6 L1075 611.6 L1076 609.6 L1077 607.6 L1078 605.6 L1079 604.7 L1080 603.7 L1081 602.8 L1082 601.9 L1083 601.2 L1084 600.5 L1085 599.8 L1086 599.3 L1087 599.1 L1088 598.9 L1089 598.7 L1090 598.3 L1091 597.9 L1092 597.4 L1093 596.9 L1094 596.3 L1095 595.6 L1096 595 L1097 594.3 L1098 593.8 L1099 593.2 L1100 593.8 L1101 594.5 L1102 595.1 L1102 595.2 L1101 595.4 L1100 595.8 L1099 596.2 L1098 596.5 L1097 596.9 L1096 597.5 L1095 598.3 L1094 599 L1093 599.7 L1092 600.5 L1091 601 L1090 601.5 L1089 601.9 L1088 602.4 L1087 602.9 L1086 603.6 L1085 604.4 L1084 605.1 L1083 605.9 L1082 606.7 L1081 607.9 L1080 609.1 L1079 610.3 L1078 611.5 L1077 612.8 L1076 614.1 L1075 615.4 L1074 616.7 L1073 618 L1072 618.7 L1071 619.4ZM1155 628.9 L1156 626 L1157 621.4 L1158 614.3 L1159 608.4 L1160 602.6 L1161 598.5 L1162 594.4 L1163 591.5 L1164 589 L1165 586.7 L1166 585 L1167 583.3 L1168 581.6 L1169 580.4 L1170 579.5 L1171 578.6 L1172 577.8 L1173 577.4 L1174 577.1 L1175 576.9 L1176 576.6 L1177 575.3 L1178 573.9 L1179 573.7 L1180 574.1 L1181 574.5 L1182 574.9 L1183 576.1 L1184 577.6 L1185 579.1 L1185 579.2 L1184 578.4 L1183 578 L1182 578.2 L1181 578.4 L1180 579.3 L1179 580.2 L1178 581.2 L1177 582.3 L1176 583.6 L1175 585 L1174 586.3 L1173 588 L1172 590 L1171 592.1 L1170 594.1 L1169 596.3 L1168 598.5 L1167 600.8 L1166 603 L1165 605.7 L1164 608.4 L1163 611.1 L1162 613.8 L1161 616.5 L1160 619.2 L1159 621.9 L1158 623.8 L1157 625.2 L1156 626.5 L1155 627.9Z" fill="#c9f0c4"/>
<path d="M24 504.1 L25 508 L26 511.9 L27 515.8 L28 519.1 L29 522.2 L30 525.3 L31 528.3 L32 531.4 L33 534 L34 536.4 L35 538.9 L36 541.3 L37 543.8 L38 545.5 L39 547.1 L40 548.6 L41 550.1 L42 551.6 L43 553.6 L44 555.6 L45 557.7 L46 559.7 L47 561.7 L48 563.9 L49 566.1 L50 568.4 L51 570.6 L52 572.8 L53 571.8 L54 570.8 L55 569.8 L56 568.7 L57 567.4 L58 566 L58 565.4 L57 565.4 L56 564.4 L55 563.4 L54 562.5 L53 561.5 L52 560.5 L51 558.8 L50 557 L49 555.3 L48 553.5 L47 551.8 L46 549.8 L45 547.8 L44 545.7 L43 543.7 L42 541.7 L41 539.7 L40 537.7 L39 535.6 L38 533.6 L37 531.5 L36 528.7 L35 526 L34 523.2 L33 520.5 L32 517.9 L31 515.9 L30 513.9 L29 511.8 L28 509.8 L27 508.1 L26 506.9 L25 505.8 L24 504.7ZM60 564.5 L61 565.6 L62 566.6 L63 567.7 L64 569.8 L65 572.1 L66 574.5 L67 576.6 L68 576.6 L69 576.6 L70 576.6 L71 576.9 L72 577.5 L73 578.2 L74 578.8 L75 578.1 L76 576.7 L77 575.4 L77 575.1 L76 575.1 L75 574.8 L74 574.6 L73 574.3 L72 574 L71 573.4 L70 572.6 L69 571.9 L68 571.2 L67 570.5 L66 569.5 L65 568.5 L64 567.4 L63 566.4 L62 565.4 L61 565.4 L60 565.4ZM88 563.4 L89 566.7 L90 570 L91 575.2 L92 582.5 L93 589.8 L94 597.7 L95 605.6 L96 611.8 L97 616.7 L98 621.4 L99 623.4 L100 625.4 L101 627.4 L102 628.1 L103 626.7 L104 625.4 L105 624 L106 622.2 L107 620.2 L108 618.2 L109 616.2 L109 616.2 L108 615.9 L107 615.6 L106 615.2 L105 614.3 L104 611.9 L103 609.6 L102 607.2 L101 604.3 L100 600.9 L99 597.6 L98 594.2 L97 590.3 L96 586.2 L95 582.2 L94 578.3 L93 575 L92 571.7 L91 568.4 L90 566.5 L89 566.2 L88 565.8ZM137 583.4 L138 584.4 L139 585.7 L140 588 L141 590.4 L142 592.7 L143 595.2 L144 597.9 L145 600.6 L146 603.3 L147 605.6 L148 607.9 L149 610.2 L150 612.5 L151 614.2 L152 615.9 L153 617.5 L154 618.8 L155 619.2 L156 619.5 L157 619.9 L158 619.4 L159 618.4 L160 617.3 L161 616.3 L162 613.8 L162 613.7 L161 614.4 L160 615.2 L159 615.9 L158 615.6 L157 614.6 L156 613.6 L155 612.6 L154 611.6 L153 609.9 L152 607.9 L151 606 L150 604 L149 602 L148 600 L147 598 L146 596 L145 594 L144 592 L143 590.3 L142 588.8 L141 587.3 L140 585.8 L139 584.3 L138 583.8 L137 583.6ZM186 586.3 L187 587.9 L188 589.5 L189 591 L190 592.4 L191 593.7 L192 595.1 L193 596.1 L194 597.1 L195 598.1 L196 599.2 L197 600.5 L198 601.8 L199 603.1 L200 604.8 L201 606.8 L202 608.9 L203 610.9 L204 612.9 L205 614.8 L206 616.8 L207 618.7 L208 619.7 L209 620.7 L210 621.7 L211 622.1 L212 621.1 L213 620.1 L214 619.1 L215 617.5 L216 615.5 L216 614.8 L215 615.2 L214 615.8 L213 616.1 L212 615.4 L211 614.6 L210 613.9 L209 613.1 L208 612.2 L207 610.4 L206 608.7 L205 606.9 L204 605.2 L203 603.5 L202 602 L201 600.5 L200 599 L199 597.5 L198 596.1 L197 595.1 L196 594.1 L195 593.1 L194 592.1 L193 591.2 L192 590.4 L191 589.7 L190 588.9 L189 588.2 L188 587.5 L187 587.1 L186 586.7ZM232 608.7 L233 610 L234 610.4 L235 610.7 L236 611.1 L237 611.4 L238 611.7 L239 612 L240 612.4 L241 612.7 L242 613 L243 613.3 L244 613.7 L245 614.3 L246 615 L247 615.7 L248 616.6 L249 618.5 L250 620.5 L251 618.1 L251 617.3 L250 618 L249 616 L248 614.1 L247 613.5 L246 613.3 L245 613 L244 612.8 L243 612.5 L242 612.3 L241 612 L240 611.8 L239 611.5 L238 611.3 L237 611 L236 610.8 L235 610.5 L234 610.3 L233 610 L232 609.8ZM271 616.8 L272 621.8 L273 626.7 L274 631.1 L275 635 L276 638.9 L277 642.8 L278 645.2 L279 647 L280 648.8 L281 650.6 L282 652.3 L283 652.1 L284 651.4 L285 650.6 L286 649.9 L287 649.1 L288 647.4 L289 645.4 L290 643.4 L290 643.2 L289 643.9 L288 644.7 L287 645.2 L286 644.4 L285 643.7 L284 642.9 L283 642.2 L282 641.2 L281 639.5 L280 637.7 L279 636 L278 634.2 L277 632.2 L276 629.4 L275 626.7 L274 624 L273 621.2 L272 618.8 L271 617.3ZM313 611 L314 612.7 L315 614.3 L316 615.9 L317 617.3 L318 618.6 L319 620 L320 621.5 L321 623.2 L322 624.9 L323 626.5 L324 628.8 L325 631.2 L326 633.5 L327 635.5 L328 636.2 L329 636.9 L330 637.6 L331 637.7 L332 637.4 L333 637 L334 636.7 L335 635.7 L336 634.3 L337 633 L338 631.7 L338 631 L337 632.5 L336 633 L335 633 L334 633 L333 633 L332 633 L331 632.2 L330 631.2 L329 630.2 L328 629.2 L327 628.2 L326 626.8 L325 625.2 L324 623.7 L323 622.2 L322 620.7 L321 619.2 L320 617.7 L319 616.2 L318 614.7 L317 613.2 L316 612.6 L315 612.1 L314 611.6 L313 611.1ZM353 610.9 L354 613 L355 614.3 L356 615.5 L357 616.8 L358 628.3 L359 644 L360 659.6 L361 670.7 L362 680.2 L363 688.1 L364 696 L365 701 L366 706 L367 709.3 L368 711 L369 712.7 L370 714.4 L371 714.4 L372 714.1 L373 713.7 L374 713.3 L375 712.8 L376 712.3 L377 711.8 L378 711.2 L379 710.4 L380 709.6 L381 708.8 L382 708.2 L383 707.6 L383 707.2 L382 707.2 L381 706.9 L380 706.2 L379 705.4 L378 704.7 L377 703.9 L376 702.8 L375 701.2 L374 699.5 L373 697.8 L372 695.2 L371 692.2 L370 689.2 L369 686.2 L368 681.6 L367 677 L366 672.5 L365 667.6 L364 661.6 L363 655.5 L362 649.5 L361 641.5 L360 631.6 L359 621.7 L358 618.6 L357 615.5 L356 614 L355 613.5 L354 613 L353 612.5ZM459 552.2 L460 555.4 L461 558.4 L462 561.4 L463 564.4 L464 566.5 L465 568.5 L466 570.4 L467 572.3 L468 573.3 L469 574.3 L470 575.3 L471 575.9 L472 575.9 L473 575.9 L474 575.9 L475 575.4 L476 574.8 L477 574.1 L478 573.4 L479 574.1 L480 574.8 L481 575.4 L482 576.4 L483 578 L484 579.7 L485 581.3 L486 583.4 L487 585.7 L488 588 L489 590.3 L490 592.7 L491 595 L492 597.3 L493 599.6 L494 601.2 L495 602.9 L496 604.6 L497 605.8 L498 606.3 L499 606.8 L500 607.3 L501 607.8 L502 608.2 L503 608.5 L504 608.9 L505 609.3 L506 609.6 L507 609.8 L508 610.1 L509 610.3 L510 610.6 L511 611.6 L512 612.7 L513 613.7 L514 615.6 L515 619 L516 622.3 L517 625.7 L518 629 L519 632.4 L520 635.7 L521 639 L522 641.6 L523 644.3 L524 646.9 L525 649.4 L526 651.3 L527 653.2 L528 655.1 L529 656.1 L530 656.2 L531 656.3 L532 656.4 L533 655.1 L534 653.5 L535 651.8 L536 650.2 L536 650.2 L535 649.2 L534 648.3 L533 647.2 L532 645.9 L531 644.7 L530 643.5 L529 642.2 L528 640.6 L527 638.6 L526 636.7 L525 634.7 L524 632.7 L523 630.3 L522 627.5 L521 624.7 L520 621.9 L519 619.1 L518 616.8 L517 614.8 L516 612.8 L515 610.8 L514 610.1 L513 609.6 L512 609.1 L511 608.5 L510 608 L509 607.3 L508 606.6 L507 605.8 L506 605.1 L505 604.4 L504 603.4 L503 602.4 L502 601.4 L501 600.4 L500 599.4 L499 598.1 L498 596.7 L497 595.4 L496 594 L495 592.5 L494 590.8 L493 589.1 L492 587.4 L491 585.6 L490 584 L489 582.5 L488 581 L487 579.4 L486 577.9 L485 576.7 L484 576 L483 575.2 L482 574.5 L481 573.8 L480 573.3 L479 573 L478 572.8 L477 572.6 L476 572.3 L475 571.9 L474 571.4 L473 570.9 L472 570.4 L471 569.9 L470 568.9 L469 567.5 L468 566.2 L467 564.8 L466 563.2 L465 561.6 L464 560 L463 558.4 L462 557.3 L461 556.1 L460 555 L459 554.6ZM570 600.5 L571 601.8 L572 603.1 L573 603.8 L574 604.5 L575 605.2 L576 605.1 L577 603.7 L578 602.4 L578 602.2 L577 602.5 L576 602.9 L575 602.8 L574 602.5 L573 602.2 L572 601.8 L571 601.5 L570 601.3ZM588 600.6 L589 601.8 L590 603.6 L591 605.6 L592 607.5 L593 609.4 L594 610.4 L595 611.3 L596 612.3 L597 613.6 L598 615.6 L599 617.7 L600 619.7 L601 620.5 L602 620.5 L603 620.5 L604 620.5 L605 619.8 L606 619.2 L607 618.5 L608 617.9 L609 617.4 L609 617.2 L608 617.1 L607 617 L606 616.9 L605 616.6 L604 615.8 L603 615 L602 614.2 L601 613.5 L600 612.5 L599 611.3 L598 610.1 L597 608.9 L596 607.6 L595 606.5 L594 605.6 L593 604.7 L592 603.8 L591 602.9 L590 602.2 L589 601.7 L588 601.2ZM616 617.3 L617 618 L618 618.6 L619 619.3 L620 618.6 L621 617.9 L622 617.3 L623 615.9 L623 615.9 L622 616.3 L621 616.7 L620 617.1 L619 617.5 L618 617.9 L617 617.9 L616 617.9ZM630 611.9 L631 616.3 L632 619.5 L633 621.9 L634 624.3 L635 626.7 L636 630.7 L637 634.6 L638 638.3 L639 641.8 L640 645.3 L641 647.3 L642 649.2 L643 650 L644 649.7 L645 649.4 L646 649.1 L647 646.6 L648 643.7 L648 642.6 L647 642.2 L646 641.9 L645 641.6 L644 639.9 L643 638.1 L642 636.4 L641 634.6 L640 632.9 L639 630.2 L638 627.5 L637 624.9 L636 622.3 L635 619.9 L634 617.6 L633 615.2 L632 613.8 L631 613 L630 612.2ZM696 615 L697 616.8 L698 617.5 L699 618.2 L700 618.8 L701 619.2 L702 618.9 L703 618.5 L704 618.2 L705 618.2 L706 618.5 L707 618.9 L708 619.2 L709 619 L710 618.7 L711 618.3 L712 617.8 L712 617 L711 617.8 L710 618 L709 618 L708 618 L707 618 L706 618 L705 618 L704 617.9 L703 617.6 L702 617.3 L701 617 L700 616.8 L699 616.5 L698 616.2 L697 615.9 L696 615.6ZM737 593.8 L738 595.8 L739 597.8 L740 599 L741 600 L742 601.1 L743 602.1 L744 602.7 L745 603.4 L746 604 L747 604.5 L748 604.9 L749 605.2 L750 605.6 L751 606.6 L752 607.6 L753 608.6 L754 609.6 L755 610.6 L756 611.6 L757 612.6 L758 612.9 L759 612.6 L760 612.4 L761 612.1 L762 611.9 L763 611.7 L764 611.4 L765 611.2 L766 610.9 L767 610.7 L768 610.4 L769 610.2 L770 609.9 L771 609.6 L772 609.4 L772 609.3 L771 609.4 L770 609.6 L769 609.7 L768 609.8 L767 609.9 L766 610 L765 609.9 L764 609.8 L763 609.6 L762 609.5 L761 609.4 L760 609.3 L759 608.8 L758 608.3 L757 607.9 L756 607.4 L755 606.9 L754 606.1 L753 605.3 L752 604.5 L751 603.6 L750 602.8 L749 602 L748 601.6 L747 601.2 L746 600.8 L745 600.4 L744 600 L743 599.1 L742 598.2 L741 597.3 L740 596.4 L739 595.6 L738 595.1 L737 594.5ZM778 609.7 L779 610.8 L780 611.9 L781 613 L782 615 L783 617.1 L784 619.1 L785 620.6 L786 621.1 L787 621.6 L788 620.4 L789 618.7 L789 617.7 L788 617.7 L787 616.9 L786 616.2 L785 615.4 L784 614.7 L783 613.8 L782 612.9 L781 612 L780 611.1 L779 610.2 L778 609.8ZM801 612.7 L802 617.1 L803 621.8 L804 626.7 L805 629.5 L806 630.2 L807 630.9 L808 631.6 L809 632.2 L810 632.8 L811 633.4 L812 634 L813 635.4 L814 636.7 L815 638.1 L816 639.4 L817 640.8 L818 642.1 L819 643.5 L820 644.8 L821 646.2 L822 647.6 L823 649 L824 650.9 L825 652.8 L826 654.3 L827 655.2 L828 656 L829 654.2 L830 652.4 L831 650.3 L832 647.8 L832 647.3 L831 647.6 L830 647.4 L829 646.6 L828 645.9 L827 645.1 L826 644.3 L825 643.3 L824 642 L823 640.8 L822 639.6 L821 638.4 L820 637.1 L819 635.9 L818 634.6 L817 633.3 L816 632.1 L815 631.2 L814 630.4 L813 629.7 L812 629 L811 628.2 L810 627.3 L809 626.3 L808 625.2 L807 624.2 L806 623.2 L805 621.4 L804 619.4 L803 617.5 L802 615.5 L801 615ZM845 641.1 L846 642.1 L847 642.5 L847 641.6 L846 641.6 L845 641.6ZM882 592.4 L883 594.9 L884 597.8 L885 601.8 L886 605.7 L887 609.7 L888 613.6 L889 617.6 L890 621.6 L891 625.5 L892 630.3 L893 635.4 L894 640.3 L895 644.8 L896 649.3 L897 653.8 L898 658.3 L899 662.9 L900 667.8 L901 672.8 L902 676.2 L903 679.1 L904 681.5 L905 682.3 L906 683.2 L907 682.7 L908 682.2 L909 681.7 L910 681.1 L911 679.7 L912 678.4 L913 677.1 L914 675.5 L915 673.5 L915 672 L914 672.4 L913 672.1 L912 671.4 L911 670.7 L910 670.1 L909 668.6 L908 667 L907 665.4 L906 663.8 L905 661.1 L904 658.4 L903 655.6 L902 652.4 L901 648.3 L900 644.3 L899 640.2 L898 636.2 L897 632.2 L896 628.2 L895 624.2 L894 620.5 L893 616.8 L892 613.2 L891 609.8 L890 607.2 L889 604.6 L888 602 L887 599.9 L886 598.2 L885 596.5 L884 594.8 L883 594.5 L882 594.5ZM956 604.6 L957 604.9 L958 605.1 L958 605 L957 604.9 L956 604.7ZM961 606.1 L962 607.7 L963 609.3 L964 610.6 L965 611.9 L966 613.1 L967 614.4 L968 615.4 L969 616.4 L970 617.4 L971 618.3 L972 618.9 L973 619.6 L974 620.3 L975 621.7 L976 623.3 L977 625 L978 626.7 L979 628.1 L980 629.4 L981 630.8 L982 632 L983 632.8 L984 633.7 L985 634.6 L986 634.7 L987 634.4 L988 634 L989 633.7 L990 633 L991 632.3 L992 631.6 L993 631 L994 630.8 L995 630.7 L996 630.5 L997 630.1 L997 629.8 L996 630 L995 630.1 L994 630.2 L993 630.4 L992 630.4 L991 630.4 L990 630.4 L989 630.4 L988 630.4 L987 629.7 L986 628.9 L985 628.2 L984 627.4 L983 626.7 L982 625.7 L981 624.7 L980 623.7 L979 622.7 L978 621.7 L977 620.7 L976 619.7 L975 618.8 L974 617.8 L973 616.8 L972 615.9 L971 615 L970 614.1 L969 613.2 L968 612.3 L967 611.4 L966 610.6 L965 609.7 L964 608.9 L963 608 L962 607.4 L961 606.8ZM1014 617.4 L1015 618 L1016 618 L1017 618 L1018 618 L1019 618 L1020 617.7 L1020 617 L1019 617.2 L1018 617.4 L1017 617.6 L1016 617.8 L1015 618 L1014 618.5ZM1047 604.8 L1048 605.6 L1049 606.4 L1050 607.2 L1051 608.1 L1052 608.9 L1053 607.1 L1054 605.3 L1054 605.3 L1053 605.5 L1052 605.7 L1051 606 L1050 605.8 L1049 605.6 L1048 605.4 L1047 605.2ZM1061 603.9 L1062 607 L1063 610 L1064 614.5 L1065 619.3 L1066 626.4 L1067 631.1 L1068 629.9 L1069 625.8 L1070 622.7 L1071 620.2 L1071 619.4 L1070 620.1 L1069 620 L1068 618.8 L1067 617.5 L1066 615.7 L1065 612.9 L1064 610.2 L1063 607.8 L1062 606.7 L1061 605.6ZM1102 595.1 L1103 595.7 L1104 596.1 L1105 596.4 L1106 596.8 L1107 597.3 L1108 597.9 L1109 598.6 L1110 599.2 L1111 600.1 L1112 601.1 L1113 602 L1114 603 L1115 604.4 L1116 605.7 L1117 607.1 L1118 608.3 L1119 609.5 L1120 610.7 L1121 611.8 L1122 612.7 L1123 613.4 L1124 614.1 L1125 614.8 L1126 615 L1127 615.2 L1128 615.3 L1129 615.5 L1130 615.7 L1131 615.8 L1132 616 L1133 616.2 L1134 616.3 L1135 616 L1136 615.8 L1137 615.6 L1138 615.8 L1139 616.5 L1140 617.1 L1141 617.8 L1142 618.9 L1143 620.3 L1144 621.6 L1145 623 L1146 625.5 L1147 628 L1148 629.8 L1149 631 L1150 632.2 L1151 632 L1152 631.8 L1153 631.1 L1154 630.1 L1155 628.9 L1155 627.9 L1154 627.7 L1153 627.3 L1152 627 L1151 626.5 L1150 625.2 L1149 624 L1148 622.7 L1147 621.5 L1146 620.3 L1145 619.5 L1144 618.6 L1143 617.8 L1142 616.9 L1141 616.2 L1140 616 L1139 615.7 L1138 615.4 L1137 615.2 L1136 615 L1135 614.8 L1134 614.7 L1133 614.5 L1132 614.4 L1131 614.1 L1130 613.5 L1129 612.9 L1128 612.3 L1127 611.7 L1126 610.9 L1125 610.1 L1124 609.2 L1123 608.3 L1122 607.4 L1121 606.5 L1120 605.5 L1119 604.5 L1118 603.5 L1117 602.5 L1116 601.6 L1115 600.9 L1114 600.1 L1113 599.3 L1112 598.6 L1111 597.9 L1110 597.4 L1109 596.9 L1108 596.4 L1107 595.9 L1106 595.6 L1105 595.5 L1104 595.4 L1103 595.3 L1102 595.2ZM1185 579.1 L1186 580.7 L1187 582.3 L1188 583.9 L1189 585.8 L1190 587.9 L1191 589.9 L1192 592 L1193 593.3 L1194 594.6 L1195 595.9 L1196 597.1 L1197 597.6 L1198 598.2 L1199 598.7 L1200 599.3 L1201 600 L1202 600.6 L1203 601.3 L1203 595.6 L1202 594.9 L1201 594.3 L1200 593.6 L1199 593 L1198 592.3 L1197 591.5 L1196 590.7 L1195 589.9 L1194 589 L1193 588 L1192 587 L1191 586 L1190 584.7 L1189 583.4 L1188 582.1 L1187 580.8 L1186 580 L1185 579.2Z" fill="#f7c9cc"/>
<path d="M2 619.4V613.3M3.7 619.4V588M5.4 619.4V572.7M7 619.4V558.2M8.7 619.4V543.9M10.4 619.4V546.6M12.1 619.4V549.3M13.7 619.4V553.6M15.4 619.4V558.3M17.1 619.4V569.2M18.8 619.4V580.5M20.4 619.4V593.5M22.1 619.4V606.5M23.8 619.4V617.5M79.1 619.4V614.1M80.7 619.4V607.2M82.4 619.4V607.3M84.1 619.4V607.4M85.8 619.4V610.1M87.4 619.4V614.5M110.9 619.4V617.1M112.6 619.4V615.1M114.3 619.4V613.7M115.9 619.4V612.4M117.6 619.4V609.7M119.3 619.4V606.2M121 619.4V603.6M122.6 619.4V602.2M124.3 619.4V602.1M126 619.4V606.3M127.7 619.4V610.4M129.3 619.4V613.4M131 619.4V615.2M132.7 619.4V616.5M134.4 619.4V617.4M136 619.4V618.4M162.8 619.4V617.5M164.5 619.4V615.3M166.2 619.4V612.2M167.9 619.4V608.6M169.5 619.4V603.7M171.2 619.4V599.1M172.9 619.4V600.2M174.6 619.4V604.8M176.2 619.4V611.5M177.9 619.4V618.1M181.3 619.4V617.3M183 619.4V616.6M184.6 619.4V616.8M218.1 619.4V616.4M219.8 619.4V615.2M221.5 619.4V614M223.2 619.4V614.3M224.8 619.4V614.1M226.5 619.4V614.3M228.2 619.4V614.7M229.9 619.4V615.3M231.5 619.4V617.5M253.3 619.4V615.9M255 619.4V612.4M256.7 619.4V610.5M258.3 619.4V614.7M263.4 619.4V618M265 619.4V618.4M268.4 619.4V617.3M270.1 619.4V618.1M291.9 619.4V614.5M293.5 619.4V609.9M295.2 619.4V605.7M296.9 619.4V601.6M298.6 619.4V598.9M300.2 619.4V601.4M301.9 619.4V604M303.6 619.4V606.5M305.3 619.4V609M306.9 619.4V611.4M308.6 619.4V611.7M310.3 619.4V613.7M312 619.4V617.7M340.4 619.4V614.7M342.1 619.4V610.9M343.8 619.4V607.4M345.5 619.4V608M347.1 619.4V609.5M348.8 619.4V610.9M350.5 619.4V613.2M352.2 619.4V615.9M385.7 619.4V616.5M387.4 619.4V616.3M389 619.4V617.5M390.7 619.4V618.2M392.4 619.4V617.8M394.1 619.4V616.4M395.7 619.4V614.2M397.4 619.4V612.1M399.1 619.4V609.7M400.8 619.4V606.9M402.4 619.4V604.1M404.1 619.4V602.6M405.8 619.4V601.3M407.5 619.4V600.7M409.1 619.4V600.5M410.8 619.4V600.8M412.5 619.4V601.1M414.2 619.4V601.1M415.8 619.4V600.4M417.5 619.4V599.8M419.2 619.4V599.3M420.9 619.4V599M422.5 619.4V597.4M424.2 619.4V596.1M425.9 619.4V593.1M427.6 619.4V590.1M429.2 619.4V590.2M430.9 619.4V590M432.6 619.4V594.5M434.3 619.4V598.3M435.9 619.4V596.4M437.6 619.4V595M439.3 619.4V596.5M441 619.4V598.8M442.6 619.4V603.4M444.3 619.4V608.1M446 619.4V612.8M447.7 619.4V607.4M449.4 619.4V596.4M451 619.4V592.6M452.7 619.4V594.5M454.4 619.4V597.5M456.1 619.4V603.3M457.7 619.4V609.5M538.2 619.4V618.1M539.8 619.4V617M541.5 619.4V615.8M543.2 619.4V615.7M544.9 619.4V613.7M546.5 619.4V612.3M548.2 619.4V610.2M549.9 619.4V607.4M551.6 619.4V605.1M553.2 619.4V603.3M554.9 619.4V602M556.6 619.4V602M558.3 619.4V602M559.9 619.4V604.6M561.6 619.4V606.1M563.3 619.4V607.7M565 619.4V610.5M566.6 619.4V613.9M568.3 619.4V616.1M580 619.4V617.6M581.7 619.4V616.6M583.4 619.4V615.9M585.1 619.4V616.4M586.7 619.4V617.6M611.9 619.4V618M613.5 619.4V618.1M615.2 619.4V618.2M623.6 619.4V617.5M625.3 619.4V613.1M627 619.4V611.7M628.6 619.4V614.7M648.7 619.4V617.9M650.4 619.4V615.8M652.1 619.4V613.7M653.8 619.4V611.2M655.4 619.4V608.6M657.1 619.4V608M658.8 619.4V608.1M660.5 619.4V609M662.1 619.4V611.6M663.8 619.4V613M665.5 619.4V614.4M667.2 619.4V616.2M668.8 619.4V617.8M677.2 619.4V618.1M678.9 619.4V617.7M680.6 619.4V616.5M682.2 619.4V614.8M683.9 619.4V614.3M685.6 619.4V616.3M687.3 619.4V618M688.9 619.4V618.2M692.3 619.4V617.7M694 619.4V616.5M695.6 619.4V618M714.1 619.4V615.9M715.8 619.4V614.3M717.4 619.4V613.6M719.1 619.4V613.3M720.8 619.4V613.3M722.5 619.4V613.3M724.1 619.4V612.6M725.8 619.4V612M727.5 619.4V611.4M729.2 619.4V610.8M730.8 619.4V612.3M732.5 619.4V613.1M734.2 619.4V615.4M735.9 619.4V617.7M791.1 619.4V617.6M792.8 619.4V615.9M794.5 619.4V614.1M796.2 619.4V615M797.8 619.4V616.1M799.5 619.4V616M801.2 619.4V617.5M833 619.4V617.4M834.7 619.4V615.5M836.4 619.4V614.3M838.1 619.4V614.4M839.7 619.4V614.3M841.4 619.4V612.8M843.1 619.4V615.5M849.8 619.4V617.7M851.5 619.4V616.6M853.1 619.4V615.3M854.8 619.4V614.6M856.5 619.4V614.6M858.2 619.4V613.3M859.8 619.4V609.2M861.5 619.4V597.2M863.2 619.4V597.5M864.9 619.4V600M866.5 619.4V604.5M868.2 619.4V606.8M869.9 619.4V609.5M871.6 619.4V611.7M873.2 619.4V610.1M874.9 619.4V608.9M876.6 619.4V608.1M878.3 619.4V609.8M879.9 619.4V613M881.6 619.4V615.6M916.8 619.4V617.4M918.5 619.4V615M920.2 619.4V613.1M921.8 619.4V611M923.5 619.4V608.9M925.2 619.4V606.9M926.9 619.4V605.5M928.5 619.4V604.2M930.2 619.4V603.6M931.9 619.4V603.1M933.6 619.4V604.4M935.2 619.4V605.4M936.9 619.4V606.8M938.6 619.4V608.3M940.3 619.4V608.5M941.9 619.4V608.7M943.6 619.4V609M945.3 619.4V609.4M947 619.4V609.8M948.6 619.4V611.8M950.3 619.4V613M952 619.4V616.1M960.4 619.4V618.4M998.9 619.4V617.8M1000.6 619.4V616.4M1002.3 619.4V616.3M1003.9 619.4V616.2M1005.6 619.4V615.5M1007.3 619.4V614.8M1009 619.4V614.7M1010.6 619.4V614.2M1012.3 619.4V615.8M1014 619.4V618.1M1022.4 619.4V617.5M1024 619.4V615.8M1025.7 619.4V614.4M1027.4 619.4V615.3M1029.1 619.4V616.6M1030.7 619.4V616.9M1032.4 619.4V616.4M1034.1 619.4V616.1M1035.8 619.4V616.6M1037.4 619.4V616.9M1039.1 619.4V615.8M1040.8 619.4V614.7M1042.5 619.4V614.2M1044.1 619.4V615.2M1045.8 619.4V618.1M1055.9 619.4V616.4M1057.5 619.4V614.1M1059.2 619.4V616.5M1060.9 619.4V617.1M1072.6 619.4V617.2M1074.3 619.4V615.4M1076 619.4V614M1077.7 619.4V612.5M1079.3 619.4V612.6M1081 619.4V613.2M1082.7 619.4V613.5M1084.4 619.4V613.7M1086 619.4V614.2M1087.7 619.4V615.1M1089.4 619.4V615.6M1091.1 619.4V615.6M1092.7 619.4V615.9M1094.4 619.4V616.1M1096.1 619.4V616.3M1097.8 619.4V616.1M1099.4 619.4V616.3M1101.1 619.4V618.4M1156.4 619.4V618M1158.1 619.4V607.4M1159.8 619.4V599.9M1161.4 619.4V596.7M1163.1 619.4V595.5M1164.8 619.4V595.9M1166.5 619.4V597.7M1168.1 619.4V598.9M1169.8 619.4V601.3M1171.5 619.4V603.7M1173.2 619.4V606.8M1174.8 619.4V609.3M1176.5 619.4V610.8M1178.2 619.4V610.4M1179.9 619.4V612.8M1181.5 619.4V615.1M1183.2 619.4V617.6" stroke="#55c455" stroke-opacity="0.75" stroke-width="0.95" fill="none"/>
<path d="M25.5 619.4V623.7M27.1 619.4V629.3M28.8 619.4V631.8M30.5 619.4V633.9M32.2 619.4V636.1M33.8 619.4V635.6M35.5 619.4V635M37.2 619.4V634.4M38.9 619.4V633.4M40.5 619.4V632.4M42.2 619.4V631.5M43.9 619.4V631.5M45.6 619.4V631.5M47.2 619.4V631.6M48.9 619.4V632.6M50.6 619.4V633.6M52.3 619.4V633.8M53.9 619.4V629.7M55.6 619.4V625.7M57.3 619.4V621.3M62.3 619.4V620.9M64 619.4V622.2M65.7 619.4V625M67.3 619.4V626.6M69 619.4V625.1M70.7 619.4V623.7M72.4 619.4V623.8M74 619.4V624.6M75.7 619.4V621.9M89.1 619.4V620.5M90.8 619.4V626.8M92.5 619.4V634.8M94.2 619.4V643.9M95.8 619.4V650.3M97.5 619.4V652.3M99.2 619.4V650.6M100.9 619.4V647.8M102.5 619.4V642.4M104.2 619.4V634.8M105.9 619.4V628.2M107.6 619.4V623.5M139.4 619.4V621.5M141.1 619.4V623.2M142.7 619.4V625M144.4 619.4V627M146.1 619.4V628.3M147.8 619.4V629M149.4 619.4V629.6M151.1 619.4V629.4M152.8 619.4V628.8M154.5 619.4V627.8M156.1 619.4V626.5M157.8 619.4V624.5M159.5 619.4V622.2M161.2 619.4V621.5M188 619.4V621.8M189.7 619.4V623.4M191.3 619.4V624.6M193 619.4V625.4M194.7 619.4V625.5M196.4 619.4V625.7M198 619.4V626.4M199.7 619.4V626.3M201.4 619.4V627.4M203.1 619.4V628.5M204.7 619.4V628.9M206.4 619.4V629.4M208.1 619.4V628.5M209.8 619.4V628.9M211.4 619.4V627.6M213.1 619.4V624M214.8 619.4V622.5M243.3 619.4V620.4M244.9 619.4V620.9M246.6 619.4V621.8M248.3 619.4V622.4M250 619.4V622.4M271.8 619.4V621.9M273.4 619.4V627.3M275.1 619.4V629.7M276.8 619.4V632.1M278.5 619.4V632.8M280.1 619.4V632.9M281.8 619.4V632.9M283.5 619.4V630.6M285.2 619.4V627.6M286.8 619.4V624.6M288.5 619.4V621.9M315.3 619.4V622.6M317 619.4V624.4M318.7 619.4V624.1M320.3 619.4V624.2M322 619.4V624.5M323.7 619.4V625.3M325.4 619.4V627M327 619.4V628.3M328.7 619.4V627.7M330.4 619.4V627M332.1 619.4V624.7M333.7 619.4V624M335.4 619.4V622M355.5 619.4V620.8M357.2 619.4V623M358.9 619.4V644M360.6 619.4V654.3M362.2 619.4V657.4M363.9 619.4V661.2M365.6 619.4V660.1M367.3 619.4V657.9M368.9 619.4V652M370.6 619.4V648.1M372.3 619.4V641.3M374 619.4V636.4M375.6 619.4V632M377.3 619.4V628.5M379 619.4V625.5M380.7 619.4V622.4M461.1 619.4V622.4M462.8 619.4V626.2M464.4 619.4V627.5M466.1 619.4V628.2M467.8 619.4V628.2M469.5 619.4V627.5M471.1 619.4V626.6M472.8 619.4V625.6M474.5 619.4V624.4M476.2 619.4V622.2M479.5 619.4V620.9M481.2 619.4V621.4M482.9 619.4V622.7M484.5 619.4V624.5M486.2 619.4V626.3M487.9 619.4V627.9M489.6 619.4V629.5M491.2 619.4V631M492.9 619.4V632.2M494.6 619.4V632.1M496.3 619.4V632.4M497.9 619.4V631.2M499.6 619.4V629.5M501.3 619.4V628.2M503 619.4V626.9M504.6 619.4V625.6M506.3 619.4V624.6M508 619.4V623.7M509.7 619.4V622.8M511.3 619.4V623.4M513 619.4V624.4M514.7 619.4V628.5M516.4 619.4V631.7M518 619.4V634.4M519.7 619.4V636M521.4 619.4V636.8M523.1 619.4V636.4M524.7 619.4V637.3M526.4 619.4V637.2M528.1 619.4V637M529.8 619.4V635.2M531.4 619.4V632.9M533.1 619.4V628.6M534.8 619.4V623.2M571.7 619.4V620.6M573.3 619.4V621.5M575 619.4V622.3M576.7 619.4V621.2M590.1 619.4V621.3M591.8 619.4V623.7M593.4 619.4V625.2M595.1 619.4V625.3M596.8 619.4V625M598.5 619.4V626.6M600.1 619.4V628.3M601.8 619.4V627.2M603.5 619.4V625.6M605.2 619.4V623.1M606.8 619.4V621.4M618.6 619.4V621.1M620.2 619.4V621.2M621.9 619.4V620.7M632 619.4V626.2M633.7 619.4V627.5M635.3 619.4V628.3M637 619.4V631.3M638.7 619.4V633.2M640.4 619.4V634.6M642 619.4V635.1M643.7 619.4V632.2M645.4 619.4V628.6M647.1 619.4V624.5M697.3 619.4V620.6M699 619.4V621.4M700.7 619.4V622.2M702.3 619.4V621M707.4 619.4V620.6M709 619.4V620.6M739.2 619.4V622.5M740.9 619.4V622.7M742.6 619.4V623M744.2 619.4V622.8M745.9 619.4V623.3M747.6 619.4V623.4M749.3 619.4V623.2M750.9 619.4V623M752.6 619.4V623.4M754.3 619.4V623.8M756 619.4V624.5M757.6 619.4V625.2M759.3 619.4V623.8M761 619.4V622.7M762.7 619.4V622M764.3 619.4V621.3M766 619.4V620.5M781.1 619.4V620.7M782.8 619.4V623M784.4 619.4V625.5M786.1 619.4V625.4M787.8 619.4V623.3M802.9 619.4V624.2M804.6 619.4V630M806.2 619.4V627.9M807.9 619.4V627.2M809.6 619.4V626.3M811.3 619.4V625.7M812.9 619.4V626.2M814.6 619.4V627.5M816.3 619.4V628.4M818 619.4V628.5M819.6 619.4V628.7M821.3 619.4V629M823 619.4V629.4M824.7 619.4V630.8M826.3 619.4V631.7M828 619.4V631.7M829.7 619.4V626.5M831.4 619.4V621.7M846.4 619.4V620.5M883.3 619.4V620.9M885 619.4V625.7M886.6 619.4V630.4M888.3 619.4V634.1M890 619.4V636.9M891.7 619.4V639.7M893.4 619.4V642.7M895 619.4V644.6M896.7 619.4V645.6M898.4 619.4V646.5M900.1 619.4V648.2M901.7 619.4V648.8M903.4 619.4V648.2M905.1 619.4V645.1M906.8 619.4V641.1M908.4 619.4V636.8M910.1 619.4V632.6M911.8 619.4V628.5M913.5 619.4V624.4M915.1 619.4V620.9M963.7 619.4V621.4M965.4 619.4V622.2M967.1 619.4V623M968.7 619.4V623.3M970.4 619.4V623.5M972.1 619.4V623.1M973.8 619.4V622.6M975.4 619.4V623.3M977.1 619.4V624.8M978.8 619.4V625.8M980.5 619.4V626.6M982.2 619.4V627M983.8 619.4V627M985.5 619.4V627.1M987.2 619.4V624.9M988.9 619.4V623.4M990.5 619.4V622.2M992.2 619.4V620.7M1019 619.4V620.4M1049.2 619.4V620.5M1050.8 619.4V621.8M1052.5 619.4V622.3M1062.6 619.4V621.1M1064.2 619.4V625.2M1065.9 619.4V632M1067.6 619.4V635.6M1069.3 619.4V624.7M1071 619.4V620.5M1106.1 619.4V620.8M1107.8 619.4V621.2M1109.5 619.4V621.5M1111.2 619.4V622.1M1112.8 619.4V622.6M1114.5 619.4V623.3M1116.2 619.4V624.5M1117.9 619.4V625.3M1119.5 619.4V625.6M1121.2 619.4V626M1122.9 619.4V625.7M1124.6 619.4V625.3M1126.2 619.4V624.1M1127.9 619.4V623.2M1129.6 619.4V622.3M1131.3 619.4V621.4M1132.9 619.4V621.4M1134.6 619.4V621.1M1139.6 619.4V620.7M1141.3 619.4V621.5M1143 619.4V622.5M1144.7 619.4V623.5M1146.3 619.4V626.3M1148 619.4V628M1149.7 619.4V627.9M1151.4 619.4V625.7M1153 619.4V623.9M1154.7 619.4V621.2M1186.6 619.4V620.8M1188.2 619.4V621.7M1189.9 619.4V623.2M1191.6 619.4V625M1193.3 619.4V626M1194.9 619.4V626.7M1196.6 619.4V627.1M1198.3 619.4V626.5M1200 619.4V626.4M1201.6 619.4V626.4" stroke="#e0575c" stroke-opacity="0.75" stroke-width="0.95" fill="none"/>
<path d="M2 670 L2.5 660 L5 628.6 L8.7 581.5 L12.4 544.3 L17.3 519.6 L21 507.2 L24 504.7 L27.3 508.4 L32.2 518.3 L37.2 532 L42.1 541.9 L47 551.8 L52 560.5 L57 565.4 L62 565.4 L66.9 570.4 L71.9 574 L76.8 575.3 L81.8 570.4 L86.7 565.4 L90.5 566.7 L94.2 579 L97.9 593.9 L101.6 606.3 L105.3 615 L109 616.2 L112.8 612.5 L116.5 605 L120.2 596.4 L123.9 589 L128.9 584 L133.8 582.8 L138.8 584 L143.7 591.4 L148.7 601.4 L153.7 611.3 L158.6 616.2 L163.6 612.5 L168.5 601.4 L173.5 590.2 L177.2 586.5 L182.2 585.2 L188.4 587.7 L193.3 591.4 L198.3 596.4 L203.2 603.8 L208.2 612.5 L213.1 616.2 L218.1 613.7 L223 610 L228 608.8 L233 610 L238 611.3 L242.9 612.5 L247.8 613.7 L250 618 L255 614.3 L261.2 611.8 L267.3 611.8 L272.3 619.3 L277.3 633 L282.2 641.6 L287.2 645.3 L292.1 641.6 L297.1 631.7 L302 620.5 L307 613 L312 610.6 L316.9 613 L321.9 620.5 L326.8 628 L331.8 633 L336.7 633 L341.7 625.5 L346.7 616.8 L351.6 611.8 L356.6 614.3 L359 621.7 L361.5 646.5 L365.2 668.8 L369 686.2 L372.7 697.3 L376.4 703.5 L381.4 707.2 L386.3 707.2 L391.3 708 L395 706 L398.7 701 L403.7 691.2 L408.6 681.2 L413.6 668.8 L418.5 654 L423.5 637.9 L428.4 620.5 L433.4 604.4 L438.4 592 L443.3 583.3 L448.3 575.9 L452 564.7 L455.7 557.3 L459.4 554.3 L463.1 558.5 L466.9 564.7 L470.6 569.7 L475.5 572.2 L480.5 573.4 L485.4 577 L490.4 584.6 L495.4 593.2 L500 599.4 L505 604.4 L510 608 L514.9 610.6 L518.6 618 L523.5 631.7 L528.5 641.6 L533.5 647.8 L536 650.2 L540.9 647.8 L545.8 641.6 L550.8 630.4 L555.8 618 L560.7 606.9 L565.7 600.7 L570.6 601.4 L575.6 603 L580.5 601.4 L585.5 600 L590.5 602.4 L595.4 606.9 L600.4 613 L605.3 616.8 L611.5 617.5 L617.7 618 L623.9 615.5 L628.9 611.3 L632.6 614.3 L636.3 623 L640 632.9 L645 641.6 L648.7 642.8 L652.4 639 L657.4 631.7 L662.3 625.5 L668.5 621.7 L674.7 619.8 L680.9 618 L687 615.5 L693.3 614.8 L698.3 616.3 L704.5 618 L710.7 618 L715.6 614.3 L720.6 609.3 L725.5 603 L730.5 597 L735.4 593.7 L739.2 595.7 L744 600 L749 602 L755 606.9 L760 609.3 L766 610 L772.3 609.3 L778.5 609.8 L783.5 614.3 L788.4 618 L793.4 615.5 L798.3 613.8 L802 615.5 L805.8 623 L810.7 628 L815.7 631.7 L820.6 637.9 L825.6 644 L830.5 647.8 L834.3 646.5 L839.2 642.8 L844.2 641.6 L849 641.6 L854 637.9 L859 631.7 L862.8 621.7 L866.5 611.8 L871.4 604.4 L876.4 598.2 L880 594.5 L883.8 594.5 L887.5 600.7 L891.3 610.6 L895 624.2 L898.7 639 L902.4 654 L906 663.8 L909.9 670 L913.6 672.5 L917.3 671.3 L921 665 L924.7 656.4 L928.4 645.3 L933.4 630.4 L938.4 618 L943.3 609.3 L948.3 605.6 L953.2 604.4 L958.2 605 L963 608 L968 612.3 L973 616.8 L978 621.7 L983 626.7 L988 630.4 L992.9 630.4 L997.8 629.7 L1000 630.4 L1005 625.5 L1010 620.5 L1014.9 618 L1021 616.8 L1026 614.3 L1031 611.8 L1036 609.8 L1040.9 606.9 L1045.8 605 L1050.8 606 L1055.8 604.9 L1059.5 603.9 L1063.2 608 L1066.4 616.8 L1069.4 620.5 L1073 618 L1076.8 613 L1081.8 606.9 L1086.7 603 L1091.7 600.7 L1096.7 597 L1101.6 595.2 L1106.6 595.7 L1111.5 598.2 L1116.5 602 L1121.4 606.9 L1126.4 611.3 L1131.4 614.3 L1136.3 615 L1141.3 616.3 L1146.2 620.5 L1151.2 626.7 L1154.9 628 L1158.6 623 L1162.3 613 L1166 603 L1169.8 594.5 L1173.5 587 L1177.2 582 L1180.9 578.4 L1183.4 577.9 L1187 580.8 L1190.8 585.8 L1194.5 589.5 L1198.3 592.5 L1203.2 595.7" stroke="#e07468" stroke-width="0.95" fill="none" stroke-linejoin="round"/>
<path d="M2 665 L2.5 656 L3.7 618.7 L6.2 569 L8.7 519.6 L12.4 487.3 L16 477.4 L19.8 484.9 L23.5 502.2 L27.3 517 L32.2 532 L37.2 544.3 L42.1 551.8 L47 561.7 L52 572.8 L55.8 569 L59.5 564 L63.2 567.9 L66.9 576.6 L70.6 576.6 L74.3 579 L78 574 L80.5 561.7 L84.3 558 L86.7 559.2 L90.5 571.6 L92.9 589 L95.4 608.8 L97.9 621.2 L101.6 628.6 L105.3 623.6 L109 616.2 L112.8 608.8 L116.5 598.9 L120.2 584 L123.9 574 L127.6 577.8 L131.4 580.3 L135 581.5 L138.8 585.2 L142.5 593.9 L146.2 603.8 L150 612.5 L153.7 618.7 L157.4 620 L161.1 616.2 L164.8 606.3 L168.5 591.4 L171 579 L173.5 574.8 L176 580.3 L178.4 586.5 L182.2 582.8 L184.6 584 L188.4 590.2 L192.1 595.2 L195.8 598.9 L199.5 603.8 L203.2 611.3 L207 618.7 L210.7 622.4 L214.4 618.7 L218.1 611.3 L221.8 606.3 L225.5 605 L229.2 605 L233 610 L236.7 611.3 L240.4 612.5 L244.1 613.7 L247.8 616.2 L250 620.5 L253.7 611.8 L256.2 605.6 L260 611.8 L263.6 610.6 L268.6 611.8 L271 616.8 L273.5 629.2 L277.3 644 L282.2 652.7 L287.2 649 L290.9 641.6 L294.6 626.7 L298.3 611.8 L302 608 L305.8 606.9 L309.5 605.6 L312 609.3 L315.7 615.5 L319.4 620.5 L323.1 626.7 L326.8 635.4 L330.5 637.9 L334.3 636.6 L338 631.7 L341.7 619.3 L344.2 610.6 L347.9 607.6 L351.6 608 L354 613 L357 616.8 L358.5 634 L359.5 654 L361.5 676.3 L364 696 L366.5 708.5 L370.2 714.7 L373.9 713.4 L377.6 711.5 L381.4 708.5 L383.8 707.2 L386.3 704 L388.8 706 L391.3 707.2 L393.7 704.8 L396.2 699.8 L398.7 693.6 L402.4 681.2 L406.1 671.3 L409.9 662.6 L413.6 654 L417.3 641.6 L421 629.2 L424.7 614.3 L427.2 600.7 L430.9 588.3 L434.6 584.6 L437.1 574.7 L440.3 570.2 L443.3 571.7 L447 574.7 L448.3 559.8 L450.7 546.2 L453.7 541.2 L457 544.9 L459.4 553.6 L463.1 564.7 L466.9 572.2 L470.6 575.9 L474.3 575.9 L478 573.4 L481.7 575.9 L485.4 582 L489.2 590.8 L492.9 599.4 L496.6 605.6 L500.3 607.5 L505 609.3 L510 610.6 L513.6 614.3 L517.3 626.7 L521 639 L524.8 649 L528.5 656 L532.2 656.4 L536 650.2 L539.7 646.5 L543.4 641.6 L547 633 L550.8 619.3 L554.5 606.9 L558.2 598.2 L562 594.5 L564.4 593.7 L568.2 598.2 L571.9 603 L575.6 605.6 L579.3 600.7 L583 597.7 L585.5 597.7 L589.2 602 L592.9 609.3 L596.7 613 L600.4 620.5 L604 620.5 L607.8 618 L611.5 616.3 L615.2 616.8 L619 619.3 L622.7 616.8 L625.2 609.3 L627.6 605.6 L629.4 609.3 L631.4 618 L635 626.7 L637.5 636.6 L640 645.3 L642.5 650.2 L646.2 649 L648.7 641.6 L652.4 634 L656 624.2 L659.9 619.3 L664.8 619.3 L669.8 620.5 L674.7 619.3 L679.7 616.8 L683.4 612.3 L687 614.3 L690.8 614.3 L694.5 612.3 L697 616.8 L700.7 619.3 L704.5 618 L708.2 619.3 L711.9 618 L714.4 611.8 L718 606.9 L721.8 603 L725.5 597 L729.2 591.5 L733 590.3 L736.7 593.2 L739.2 598.2 L742.9 602 L746.6 604.4 L750 605.6 L753.7 609.3 L757.4 613 L762.4 611.8 L767.3 610.6 L772.3 609.3 L777.3 608.9 L781 613 L784.7 620.5 L787.2 621.7 L790.9 615.5 L794.6 610.6 L798.3 611.3 L800.8 611.8 L802.5 619.3 L804.5 629.2 L808.2 631.7 L812 634 L815.7 639 L819.4 644 L823 649 L825.6 654 L828 656 L830.5 651.5 L833 645.3 L836.7 640.3 L839.2 639 L841.7 636.6 L844.2 640.3 L846.7 642.8 L850.4 639 L854 634 L857.8 629.2 L860.3 619.3 L861.5 606.9 L864 600.7 L867.7 599 L871.4 598.2 L873.9 593.2 L876.4 588.8 L878.9 588.3 L881.4 590.8 L883.8 597 L886.3 606.9 L888.8 616.8 L891.3 626.7 L893.7 639 L896.2 650.2 L898.7 661.4 L901.2 673.8 L903.7 681.2 L906 683.2 L909.9 681.2 L913.6 676.3 L917.3 668.8 L921 659 L924.7 646.5 L928.4 632.9 L932.2 620.5 L935.9 613 L939.6 606.9 L943.3 600.7 L947 598.7 L950.7 600 L953.2 603.9 L957 604.9 L960.7 605.6 L963 609.3 L966.9 614.3 L970.6 618 L974.3 620.5 L978 626.7 L981.7 631.7 L985.4 634.9 L989.2 633.6 L992.9 631 L996.6 630.4 L1000 628 L1003.7 624.2 L1007.4 619.3 L1011 615.5 L1014.9 618 L1019.8 618 L1023.5 613 L1026 610 L1029.7 610.6 L1033.5 608 L1037 607.4 L1040.9 603 L1043.4 601.4 L1045.8 603.9 L1049.6 606.9 L1052 608.9 L1054.5 604.4 L1057.5 600 L1060.7 603 L1063.2 610.6 L1065 619.3 L1066.4 629.2 L1067.4 632.4 L1069.4 624.2 L1071.9 618 L1074.3 613 L1078 605.6 L1081.8 602 L1085.5 599.4 L1089.2 598.7 L1092.9 597 L1096.7 594.5 L1099 593.2 L1102.9 595.7 L1106.6 597 L1110.3 599.4 L1114 603 L1117.7 608 L1121.4 612.3 L1125 614.8 L1128.9 615.5 L1133.8 616.3 L1137.5 615.5 L1141.3 618 L1145 623 L1147.5 629.2 L1150 632.2 L1152.4 631.7 L1154.9 629.2 L1156.6 624.2 L1158 614.3 L1159.9 603 L1162.3 593.2 L1164.8 587 L1168.5 580.8 L1172.2 577.6 L1176 576.6 L1178.4 573.4 L1182.2 575 L1184.6 578.4 L1188.4 584.6 L1192 592 L1195.8 597 L1199.5 599 L1203.2 601.4" stroke="#343cc4" stroke-width="0.95" fill="none" stroke-linejoin="round"/>
<path d="M1.6 619.4H1239.5" stroke="#2a38c8" stroke-width="1"/>
<path d="M1.6 52.3H1239.5M1.6 51.6V460.2H1239.5V51.6" stroke="#2b2b2b" stroke-width="1.5" fill="none"/>
<path d="M1.6 463.4H1239.5V728H1.6Z" stroke="#2b2b2b" stroke-width="1.5" fill="none"/>
<path d="M1239.5 452.3h3.2M1239.5 444.2h3.2M1239.5 436.1h3.2M1239.5 428h3.2M1239.5 419.9h3.2M1239.5 411.8h3.2M1239.5 403.7h3.2M1239.5 395.6h3.2M1239.5 387.5h3.2M1239.5 379.4h3.2M1239.5 371.3h3.2M1239.5 363.2h3.2M1239.5 355.1h3.2M1239.5 347h3.2M1239.5 338.9h3.2M1239.5 330.8h3.2M1239.5 322.7h3.2M1239.5 314.6h3.2M1239.5 306.5h3.2M1239.5 298.4h3.2M1239.5 290.3h3.2M1239.5 282.2h3.2M1239.5 274.1h3.2M1239.5 265.9h3.2M1239.5 257.8h3.2M1239.5 249.7h3.2M1239.5 241.6h3.2M1239.5 233.5h3.2M1239.5 225.4h3.2M1239.5 217.3h3.2M1239.5 209.2h3.2M1239.5 201.1h3.2M1239.5 193h3.2M1239.5 184.9h3.2M1239.5 176.8h3.2M1239.5 168.7h3.2M1239.5 160.6h3.2M1239.5 152.5h3.2M1239.5 144.4h3.2M1239.5 136.3h3.2M1239.5 128.2h3.2M1239.5 120.1h3.2M1239.5 112h3.2M1239.5 103.9h3.2M1239.5 95.8h3.2M1239.5 87.7h3.2M1239.5 79.6h3.2M1239.5 71.5h3.2M1239.5 63.4h3.2M1239.5 718.4h3.2M1239.5 698.6h3.2M1239.5 678.8h3.2M1239.5 659h3.2M1239.5 639.2h3.2M1239.5 619.4h3.2M1239.5 599.6h3.2M1239.5 579.8h3.2M1239.5 560h3.2M1239.5 540.2h3.2M1239.5 520.4h3.2M1239.5 500.6h3.2M1239.5 480.8h3.2" stroke="#2b2b2b" stroke-width="1.3"/>
<text x="1245" y="456.1" font-family="Liberation Sans, Arial, sans-serif" font-weight="bold" font-size="10.6" fill="#111" textLength="23.5" lengthAdjust="spacingAndGlyphs">4.380</text>
<text x="1245" y="439.9" font-family="Liberation Sans, Arial, sans-serif" font-weight="bold" font-size="10.6" fill="#111" textLength="23.5" lengthAdjust="spacingAndGlyphs">4.400</text>
<text x="1245" y="423.7" font-family="Liberation Sans, Arial, sans-serif" font-weight="bold" font-size="10.6" fill="#111" textLength="23.5" lengthAdjust="spacingAndGlyphs">4.420</text>
<text x="1245" y="407.5" font-family="Liberation Sans, Arial, sans-serif" font-weight="bold" font-size="10.6" fill="#111" textLength="23.5" lengthAdjust="spacingAndGlyphs">4.440</text>
<text x="1245" y="391.3" font-family="Liberation Sans, Arial, sans-serif" font-weight="bold" font-size="10.6" fill="#111" textLength="23.5" lengthAdjust="spacingAndGlyphs">4.460</text>
<text x="1245" y="375.1" font-family="Liberation Sans, Arial, sans-serif" font-weight="bold" font-size="10.6" fill="#111" textLength="23.5" lengthAdjust="spacingAndGlyphs">4.480</text>
<text x="1245" y="358.9" font-family="Liberation Sans, Arial, sans-serif" font-weight="bold" font-size="10.6" fill="#111" textLength="23.5" lengthAdjust="spacingAndGlyphs">4.500</text>
<text x="1245" y="342.7" font-family="Liberation Sans, Arial, sans-serif" font-weight="bold" font-size="10.6" fill="#111" textLength="23.5" lengthAdjust="spacingAndGlyphs">4.520</text>
<text x="1245" y="326.5" font-family="Liberation Sans, Arial, sans-serif" font-weight="bold" font-size="10.6" fill="#111" textLength="23.5" lengthAdjust="spacingAndGlyphs">4.540</text>
<text x="1245" y="310.3" font-family="Liberation Sans, Arial, sans-serif" font-weight="bold" font-size="10.6" fill="#111" textLength="23.5" lengthAdjust="spacingAndGlyphs">4.560</text>
<text x="1245" y="294.1" font-family="Liberation Sans, Arial, sans-serif" font-weight="bold" font-size="10.6" fill="#111" textLength="23.5" lengthAdjust="spacingAndGlyphs">4.580</text>
<text x="1245" y="277.9" font-family="Liberation Sans, Arial, sans-serif" font-weight="bold" font-size="10.6" fill="#111" textLength="23.5" lengthAdjust="spacingAndGlyphs">4.600</text>
<text x="1245" y="261.6" font-family="Liberation Sans, Arial, sans-serif" font-weight="bold" font-size="10.6" fill="#111" textLength="23.5" lengthAdjust="spacingAndGlyphs">4.620</text>
<text x="1245" y="245.4" font-family="Liberation Sans, Arial, sans-serif" font-weight="bold" font-size="10.6" fill="#111" textLength="23.5" lengthAdjust="spacingAndGlyphs">4.640</text>
<text x="1245" y="229.2" font-family="Liberation Sans, Arial, sans-serif" font-weight="bold" font-size="10.6" fill="#111" textLength="23.5" lengthAdjust="spacingAndGlyphs">4.660</text>
<text x="1245" y="213" font-family="Liberation Sans, Arial, sans-serif" font-weight="bold" font-size="10.6" fill="#111" textLength="23.5" lengthAdjust="spacingAndGlyphs">4.680</text>
<text x="1245" y="196.8" font-family="Liberation Sans, Arial, sans-serif" font-weight="bold" font-size="10.6" fill="#111" textLength="23.5" lengthAdjust="spacingAndGlyphs">4.700</text>
<text x="1245" y="180.6" font-family="Liberation Sans, Arial, sans-serif" font-weight="bold" font-size="10.6" fill="#111" textLength="23.5" lengthAdjust="spacingAndGlyphs">4.720</text>
<text x="1245" y="164.4" font-family="Liberation Sans, Arial, sans-serif" font-weight="bold" font-size="10.6" fill="#111" textLength="23.5" lengthAdjust="spacingAndGlyphs">4.740</text>
<text x="1245" y="148.2" font-family="Liberation Sans, Arial, sans-serif" font-weight="bold" font-size="10.6" fill="#111" textLength="23.5" lengthAdjust="spacingAndGlyphs">4.760</text>
<text x="1245" y="132" font-family="Liberation Sans, Arial, sans-serif" font-weight="bold" font-size="10.6" fill="#111" textLength="23.5" lengthAdjust="spacingAndGlyphs">4.780</text>
<text x="1245" y="115.8" font-family="Liberation Sans, Arial, sans-serif" font-weight="bold" font-size="10.6" fill="#111" textLength="23.5" lengthAdjust="spacingAndGlyphs">4.800</text>
<text x="1245" y="99.6" font-family="Liberation Sans, Arial, sans-serif" font-weight="bold" font-size="10.6" fill="#111" textLength="23.5" lengthAdjust="spacingAndGlyphs">4.820</text>
<text x="1245" y="83.4" font-family="Liberation Sans, Arial, sans-serif" font-weight="bold" font-size="10.6" fill="#111" textLength="23.5" lengthAdjust="spacingAndGlyphs">4.840</text>
<text x="1245" y="67.2" font-family="Liberation Sans, Arial, sans-serif" font-weight="bold" font-size="10.6" fill="#111" textLength="23.5" lengthAdjust="spacingAndGlyphs">4.860</text>
<text x="1245" y="722.2" font-family="Liberation Sans, Arial, sans-serif" font-weight="bold" font-size="10.6" fill="#111" textLength="13.6" lengthAdjust="spacingAndGlyphs">-50</text>
<text x="1245" y="702.4" font-family="Liberation Sans, Arial, sans-serif" font-weight="bold" font-size="10.6" fill="#111" textLength="13.6" lengthAdjust="spacingAndGlyphs">-40</text>
<text x="1245" y="682.6" font-family="Liberation Sans, Arial, sans-serif" font-weight="bold" font-size="10.6" fill="#111" textLength="13.6" lengthAdjust="spacingAndGlyphs">-30</text>
<text x="1245" y="662.8" font-family="Liberation Sans, Arial, sans-serif" font-weight="bold" font-size="10.6" fill="#111" textLength="13.6" lengthAdjust="spacingAndGlyphs">-20</text>
<text x="1245" y="643" font-family="Liberation Sans, Arial, sans-serif" font-weight="bold" font-size="10.6" fill="#111" textLength="13.6" lengthAdjust="spacingAndGlyphs">-10</text>
<text x="1245" y="583.6" font-family="Liberation Sans, Arial, sans-serif" font-weight="bold" font-size="10.6" fill="#111" textLength="10.4" lengthAdjust="spacingAndGlyphs">20</text>
<text x="1245" y="563.8" font-family="Liberation Sans, Arial, sans-serif" font-weight="bold" font-size="10.6" fill="#111" textLength="10.4" lengthAdjust="spacingAndGlyphs">30</text>
<text x="1245" y="544" font-family="Liberation Sans, Arial, sans-serif" font-weight="bold" font-size="10.6" fill="#111" textLength="10.4" lengthAdjust="spacingAndGlyphs">40</text>
<text x="1245" y="524.2" font-family="Liberation Sans, Arial, sans-serif" font-weight="bold" font-size="10.6" fill="#111" textLength="10.4" lengthAdjust="spacingAndGlyphs">50</text>
<text x="1245" y="504.4" font-family="Liberation Sans, Arial, sans-serif" font-weight="bold" font-size="10.6" fill="#111" textLength="10.4" lengthAdjust="spacingAndGlyphs">60</text>
<text x="1245" y="484.6" font-family="Liberation Sans, Arial, sans-serif" font-weight="bold" font-size="10.6" fill="#111" textLength="10.4" lengthAdjust="spacingAndGlyphs">70</text>
<rect x="1243.6" y="121" width="34.6" height="11" fill="#fff" stroke="#2b2b2b" stroke-width="1.2"/>
<text x="1246" y="131.2" font-family="Liberation Sans, Arial, sans-serif" font-weight="bold" font-size="10.6" fill="#e02a2a" textLength="30" lengthAdjust="spacingAndGlyphs">4.789,72</text>
<rect x="1243.6" y="114.3" width="37" height="13.3" fill="#f6b90e" stroke="#3a2c00" stroke-width="1.1"/>
<text x="1245.2" y="124.6" font-family="Liberation Sans, Arial, sans-serif" font-weight="bold" font-size="10.8" fill="#1a1200" textLength="35.5" lengthAdjust="spacingAndGlyphs">4.789,72</text>
<rect x="1243.6" y="596" width="31.6" height="11" fill="#fff" stroke="#2b2b2b" stroke-width="1.3"/>
<text x="1245.5" y="609.5" font-family="Liberation Sans, Arial, sans-serif" font-weight="bold" font-size="10.6" fill="#2a38c8" textLength="28" lengthAdjust="spacingAndGlyphs">8,8672</text>
<rect x="1243.6" y="589.2" width="31.6" height="13.2" fill="#fff" stroke="#2b2b2b" stroke-width="1.3"/>
<text x="1245.5" y="599.7" font-family="Liberation Sans, Arial, sans-serif" font-weight="bold" font-size="10.6" fill="#e0575c" textLength="28" lengthAdjust="spacingAndGlyphs">11,502</text>
<rect x="1243.6" y="612.2" width="6.8" height="7" fill="#fff" stroke="#2b2b2b" stroke-width="1.2"/>
<text x="1245" y="622.5" font-family="Liberation Sans, Arial, sans-serif" font-weight="bold" font-size="10.6" fill="#2a38c8">0</text>
<rect x="1243.6" y="617.6" width="35.4" height="12.8" fill="#fff" stroke="#2b2b2b" stroke-width="1.3"/>
<text x="1245.3" y="628" font-family="Liberation Sans, Arial, sans-serif" font-weight="bold" font-size="10.6" fill="#e0575c" textLength="32" lengthAdjust="spacingAndGlyphs">-2,6352</text>
<text x="23.8" y="742.3" font-family="Liberation Sans, Arial, sans-serif" font-size="10.4" fill="#111" text-anchor="middle" textLength="23.4" lengthAdjust="spacingAndGlyphs">11:00</text>
<text x="54" y="742.3" font-family="Liberation Sans, Arial, sans-serif" font-size="10.4" fill="#111" text-anchor="middle" textLength="23.4" lengthAdjust="spacingAndGlyphs">14:00</text>
<text x="92.5" y="742.3" font-family="Liberation Sans, Arial, sans-serif"  fill="#111" text-anchor="middle" font-weight="bold" font-size="10.6">9</text>
<text x="122.7" y="742.3" font-family="Liberation Sans, Arial, sans-serif" font-size="10.4" fill="#111" text-anchor="middle" textLength="23.4" lengthAdjust="spacingAndGlyphs">12:00</text>
<text x="152.8" y="742.3" font-family="Liberation Sans, Arial, sans-serif" font-size="10.4" fill="#111" text-anchor="middle" textLength="23.4" lengthAdjust="spacingAndGlyphs">15:00</text>
<text x="181.3" y="742.3" font-family="Liberation Sans, Arial, sans-serif"  fill="#111" text-anchor="middle" font-weight="bold" font-size="10.6">10</text>
<text x="211.5" y="742.3" font-family="Liberation Sans, Arial, sans-serif" font-size="10.4" fill="#111" text-anchor="middle" textLength="23.4" lengthAdjust="spacingAndGlyphs">12:00</text>
<text x="241.6" y="742.3" font-family="Liberation Sans, Arial, sans-serif" font-size="10.4" fill="#111" text-anchor="middle" textLength="23.4" lengthAdjust="spacingAndGlyphs">15:00</text>
<text x="270.1" y="742.3" font-family="Liberation Sans, Arial, sans-serif"  fill="#111" text-anchor="middle" font-weight="bold" font-size="10.6">11</text>
<text x="300.3" y="742.3" font-family="Liberation Sans, Arial, sans-serif" font-size="10.4" fill="#111" text-anchor="middle" textLength="23.4" lengthAdjust="spacingAndGlyphs">12:00</text>
<text x="330.4" y="742.3" font-family="Liberation Sans, Arial, sans-serif" font-size="10.4" fill="#111" text-anchor="middle" textLength="23.4" lengthAdjust="spacingAndGlyphs">15:00</text>
<text x="358.9" y="742.3" font-family="Liberation Sans, Arial, sans-serif"  fill="#111" text-anchor="middle" font-weight="bold" font-size="10.6">12</text>
<text x="389.1" y="742.3" font-family="Liberation Sans, Arial, sans-serif" font-size="10.4" fill="#111" text-anchor="middle" textLength="23.4" lengthAdjust="spacingAndGlyphs">12:00</text>
<text x="419.2" y="742.3" font-family="Liberation Sans, Arial, sans-serif" font-size="10.4" fill="#111" text-anchor="middle" textLength="23.4" lengthAdjust="spacingAndGlyphs">15:00</text>
<text x="447.7" y="742.3" font-family="Liberation Sans, Arial, sans-serif"  fill="#111" text-anchor="middle" font-weight="bold" font-size="10.6">15</text>
<text x="477.9" y="742.3" font-family="Liberation Sans, Arial, sans-serif" font-size="10.4" fill="#111" text-anchor="middle" textLength="23.4" lengthAdjust="spacingAndGlyphs">12:00</text>
<text x="508" y="742.3" font-family="Liberation Sans, Arial, sans-serif" font-size="10.4" fill="#111" text-anchor="middle" textLength="23.4" lengthAdjust="spacingAndGlyphs">15:00</text>
<text x="536.5" y="742.3" font-family="Liberation Sans, Arial, sans-serif"  fill="#111" text-anchor="middle" font-weight="bold" font-size="10.6">16</text>
<text x="566.7" y="742.3" font-family="Liberation Sans, Arial, sans-serif" font-size="10.4" fill="#111" text-anchor="middle" textLength="23.4" lengthAdjust="spacingAndGlyphs">12:00</text>
<text x="596.8" y="742.3" font-family="Liberation Sans, Arial, sans-serif" font-size="10.4" fill="#111" text-anchor="middle" textLength="23.4" lengthAdjust="spacingAndGlyphs">15:00</text>
<text x="625.3" y="742.3" font-family="Liberation Sans, Arial, sans-serif"  fill="#111" text-anchor="middle" font-weight="bold" font-size="10.6">17</text>
<text x="655.5" y="742.3" font-family="Liberation Sans, Arial, sans-serif" font-size="10.4" fill="#111" text-anchor="middle" textLength="23.4" lengthAdjust="spacingAndGlyphs">12:00</text>
<text x="685.6" y="742.3" font-family="Liberation Sans, Arial, sans-serif" font-size="10.4" fill="#111" text-anchor="middle" textLength="23.4" lengthAdjust="spacingAndGlyphs">15:00</text>
<text x="714.1" y="742.3" font-family="Liberation Sans, Arial, sans-serif"  fill="#111" text-anchor="middle" font-weight="bold" font-size="10.6">18</text>
<text x="744.3" y="742.3" font-family="Liberation Sans, Arial, sans-serif" font-size="10.4" fill="#111" text-anchor="middle" textLength="23.4" lengthAdjust="spacingAndGlyphs">12:00</text>
<text x="774.4" y="742.3" font-family="Liberation Sans, Arial, sans-serif" font-size="10.4" fill="#111" text-anchor="middle" textLength="23.4" lengthAdjust="spacingAndGlyphs">15:00</text>
<text x="802.9" y="742.3" font-family="Liberation Sans, Arial, sans-serif"  fill="#111" text-anchor="middle" font-weight="bold" font-size="10.6">19</text>
<text x="833.1" y="742.3" font-family="Liberation Sans, Arial, sans-serif" font-size="10.4" fill="#111" text-anchor="middle" textLength="23.4" lengthAdjust="spacingAndGlyphs">12:00</text>
<text x="863.2" y="742.3" font-family="Liberation Sans, Arial, sans-serif" font-size="10.4" fill="#111" text-anchor="middle" textLength="23.4" lengthAdjust="spacingAndGlyphs">15:00</text>
<text x="891.7" y="742.3" font-family="Liberation Sans, Arial, sans-serif"  fill="#111" text-anchor="middle" font-weight="bold" font-size="10.6">22</text>
<text x="921.9" y="742.3" font-family="Liberation Sans, Arial, sans-serif" font-size="10.4" fill="#111" text-anchor="middle" textLength="23.4" lengthAdjust="spacingAndGlyphs">12:00</text>
<text x="952" y="742.3" font-family="Liberation Sans, Arial, sans-serif" font-size="10.4" fill="#111" text-anchor="middle" textLength="23.4" lengthAdjust="spacingAndGlyphs">15:00</text>
<text x="980.5" y="742.3" font-family="Liberation Sans, Arial, sans-serif"  fill="#111" text-anchor="middle" font-weight="bold" font-size="10.6">23</text>
<text x="1010.7" y="742.3" font-family="Liberation Sans, Arial, sans-serif" font-size="10.4" fill="#111" text-anchor="middle" textLength="23.4" lengthAdjust="spacingAndGlyphs">12:00</text>
<text x="1040.8" y="742.3" font-family="Liberation Sans, Arial, sans-serif" font-size="10.4" fill="#111" text-anchor="middle" textLength="23.4" lengthAdjust="spacingAndGlyphs">15:00</text>
<text x="1069.3" y="742.3" font-family="Liberation Sans, Arial, sans-serif"  fill="#111" text-anchor="middle" font-weight="bold" font-size="10.6">29</text>
<text x="1099.5" y="742.3" font-family="Liberation Sans, Arial, sans-serif" font-size="10.4" fill="#111" text-anchor="middle" textLength="23.4" lengthAdjust="spacingAndGlyphs">12:00</text>
<text x="1129.6" y="742.3" font-family="Liberation Sans, Arial, sans-serif" font-size="10.4" fill="#111" text-anchor="middle" textLength="23.4" lengthAdjust="spacingAndGlyphs">15:00</text>
<text x="1158.1" y="742.3" font-family="Liberation Sans, Arial, sans-serif"  fill="#111" text-anchor="middle" font-weight="bold" font-size="10.6">30</text>
<text x="1188.3" y="742.3" font-family="Liberation Sans, Arial, sans-serif" font-size="10.4" fill="#111" text-anchor="middle" textLength="23.4" lengthAdjust="spacingAndGlyphs">12:00</text>
<text x="1218.4" y="742.3" font-family="Liberation Sans, Arial, sans-serif" font-size="10.4" fill="#111" text-anchor="middle" textLength="23.4" lengthAdjust="spacingAndGlyphs">15:00</text>
<path d="M23.8 728v3.6M54 728v3.6M92.5 728v3.6M122.7 728v3.6M152.8 728v3.6M181.3 728v3.6M211.5 728v3.6M241.6 728v3.6M270.1 728v3.6M300.3 728v3.6M330.4 728v3.6M358.9 728v3.6M389.1 728v3.6M419.2 728v3.6M447.7 728v3.6M477.9 728v3.6M508 728v3.6M536.5 728v3.6M566.7 728v3.6M596.8 728v3.6M625.3 728v3.6M655.5 728v3.6M685.6 728v3.6M714.1 728v3.6M744.3 728v3.6M774.4 728v3.6M802.9 728v3.6M833.1 728v3.6M863.2 728v3.6M891.7 728v3.6M921.9 728v3.6M952 728v3.6M980.5 728v3.6M1010.7 728v3.6M1040.8 728v3.6M1069.3 728v3.6M1099.5 728v3.6M1129.6 728v3.6M1158.1 728v3.6M1188.3 728v3.6M1218.4 728v3.6" stroke="#2b2b2b" stroke-width="1.2"/>
<rect x="2" y="52.5" width="83.6" height="16" fill="#f0f0f0" stroke="#7d9a6f" stroke-width="1"/>
<text x="4" y="64.2" font-family="Liberation Sans, Arial, sans-serif" font-size="10.4" fill="#222" textLength="20" lengthAdjust="spacingAndGlyphs">Kurs</text>
<g transform="translate(35.9 54.2)"><path d="M0.5 10.1L4.7 5.6C3.9 3.4 4.6 1.2 6.0 0.5L7.5 0.5L7.3 3.3L8.6 4.4L10.7 3.2L10.9 5.0C10.3 6.6 8.4 7.4 6.5 6.9L2.5 11.1C1.6 11.7 0.2 11.0 0.5 10.1Z" fill="#fafafa" stroke="#262626" stroke-width="1.05" stroke-linejoin="round"/></g><g transform="translate(53.7 54.3)"><rect x="0.7" y="0.9" width="9.8" height="9.9" rx="1.5" fill="#fff" stroke="#1a1a1a" stroke-width="1.5"/><path d="M0.7 2.2Q0.7 0.6 2.2 0.6H9Q10.5 0.6 10.5 2.2V3.9H0.7Z" fill="#111"/></g><g transform="translate(71.7 54.4)"><circle cx="5.65" cy="5.65" r="5.65" fill="#3a3a3a"/><path d="M3.1 3.1L8.2 8.2M8.2 3.1L3.1 8.2" stroke="#fff" stroke-width="2.1" stroke-linecap="round"/></g>
<rect x="2" y="463.7" width="131.4" height="15.6" fill="#f0f0f0" stroke="#7d9a6f" stroke-width="1"/>
<text x="4" y="475.3" font-family="Liberation Sans, Arial, sans-serif" font-size="10.4" fill="#222" textLength="68" lengthAdjust="spacingAndGlyphs">MACD (12 26 9)</text>
<g transform="translate(84.1 465.3)"><path d="M0.5 10.1L4.7 5.6C3.9 3.4 4.6 1.2 6.0 0.5L7.5 0.5L7.3 3.3L8.6 4.4L10.7 3.2L10.9 5.0C10.3 6.6 8.4 7.4 6.5 6.9L2.5 11.1C1.6 11.7 0.2 11.0 0.5 10.1Z" fill="#fafafa" stroke="#262626" stroke-width="1.05" stroke-linejoin="round"/></g><g transform="translate(101.9 465.4)"><rect x="0.7" y="0.9" width="9.8" height="9.9" rx="1.5" fill="#fff" stroke="#1a1a1a" stroke-width="1.5"/><path d="M0.7 2.2Q0.7 0.6 2.2 0.6H9Q10.5 0.6 10.5 2.2V3.9H0.7Z" fill="#111"/></g><g transform="translate(119.9 465.5)"><circle cx="5.65" cy="5.65" r="5.65" fill="#3a3a3a"/><path d="M3.1 3.1L8.2 8.2M8.2 3.1L3.1 8.2" stroke="#fff" stroke-width="2.1" stroke-linecap="round"/></g>
<text x="3" y="458" font-family="Liberation Sans, Arial, sans-serif" font-size="10.4" fill="#3a8a3a" textLength="83" lengthAdjust="spacingAndGlyphs">© ProRealTime.com</text>
<text x="92" y="458" font-family="Liberation Sans, Arial, sans-serif" font-size="10.4" font-style="italic" fill="#3a8a3a" textLength="88" lengthAdjust="spacingAndGlyphs">Daten sind Realtime</text></svg>
<div id="bot"></div>
<div class="pressed" style="left:51.3px;width:22.2px"></div>
<div class="pressed" style="left:1208.3px;width:23px"></div>
<svg width="1280" height="22" viewBox="0 745 1280 22" style="position:absolute;left:0;top:745px">
<!-- envelope -->
<rect x="4.6" y="753.2" width="14.6" height="10.6" rx="1" fill="#fff" stroke="#1a1a1a" stroke-width="1.3"/><path d="M5 753.8L12 759.2L19 753.8M5 763.4L10.2 758.2M19 763.4L13.8 758.2" stroke="#1a1a1a" stroke-width="1.1" fill="none"/>
<!-- printer -->
<path d="M33.5 756.5L35.5 751.5H42.5L41 756.5Z" fill="#fff" stroke="#222" stroke-width="1"/><rect x="29.6" y="756.2" width="15" height="6.6" rx="1.6" fill="#8a8a8a" stroke="#222" stroke-width="1"/><path d="M31 760H43.4" stroke="#222" stroke-width="1"/><path d="M31.5 763.6H42.5" stroke="#444" stroke-width="1.2"/>
<!-- chain -->
<rect x="59.4" y="751.6" width="6.4" height="6.4" rx="2.6" fill="none" stroke="#111" stroke-width="1.6"/><rect x="59.4" y="758.4" width="6.4" height="6.4" rx="2.6" fill="none" stroke="#111" stroke-width="1.6"/><path d="M62.6 754.6V761.8" stroke="#111" stroke-width="1.4"/>
<!-- list icon -->
<rect x="82.6" y="752.4" width="10" height="11.2" fill="#fff" stroke="#222" stroke-width="1.1"/><path d="M84 755h5M84 757.4h7M86 759.8h5M86 762h5" stroke="#111" stroke-width="1"/><path d="M89.4 752.6h3.4l-1.7 2.2z" fill="#e03040"/><path d="M83 763.4h3.6l-1.8-2.4z" fill="#30b040"/>
<!-- scrollbar -->
<rect x="101.4" y="751.4" width="12.4" height="13.2" rx="3" fill="#fcfcfc" stroke="#cfcfcf" stroke-width="1"/><path d="M110 755L105.6 758L110 761Z" fill="#111"/>
<rect x="114" y="751.4" width="1054" height="13.2" fill="#f4f4f4" stroke="#dcdcdc" stroke-width="1"/>
<rect x="247.6" y="751.4" width="916.4" height="13.2" rx="3" fill="#fdfdfd" stroke="#d0d0d0" stroke-width="1"/>
<path d="M702.6 755.6H708M702.6 758H708M702.6 760.4H708" stroke="#b0b0b0" stroke-width="0.8"/>
<rect x="1168.4" y="751.4" width="12.6" height="13.2" rx="3" fill="#fcfcfc" stroke="#cfcfcf" stroke-width="1"/><path d="M1172.6 755L1177 758L1172.6 761Z" fill="#111"/>
<!-- candles+wrench -->
<path d="M1198.4 750.6V765" stroke="#222" stroke-width="1"/><rect x="1195.6" y="752.2" width="5.6" height="4.6" fill="#38c048" stroke="#163" stroke-width=".7"/><rect x="1196.6" y="759.6" width="5" height="4.6" fill="#38c048" stroke="#163" stroke-width=".7"/><rect x="1188.6" y="758.6" width="5" height="5.4" fill="#e04048" stroke="#611" stroke-width=".7"/><path d="M1189.6 764.6L1195.4 757.4A2.6 2.6 0 0 1 1198.8 754.2L1197.2 756L1198 757L1199.8 755.4A2.6 2.6 0 0 1 1196.6 758.6L1191 765.4Z" fill="#f4f4f4" stroke="#333" stroke-width=".9"/>
<!-- magnifier with arrows -->
<circle cx="1217.6" cy="756.4" r="4.6" fill="#d8d8d8" stroke="#555" stroke-width="1.3"/><path d="M1221 760L1226.6 765.4" stroke="#111" stroke-width="2.4" stroke-linecap="round"/><path d="M1227.6 751.6V759.6M1225.8 753.4L1227.6 751.2L1229.4 753.4M1225.8 757.8L1227.6 760L1229.4 757.8M1212 764H1219.6M1213.8 762.2L1211.6 764L1213.8 765.8M1217.8 762.2L1220 764L1217.8 765.8" stroke="#1a30e0" stroke-width="1.1" fill="none"/>
<!-- zoom out -->
<circle cx="1243.4" cy="756" r="4.6" fill="#fff" stroke="#555" stroke-width="1.3"/><path d="M1246.8 759.6L1252.4 765" stroke="#111" stroke-width="2.4" stroke-linecap="round"/><path d="M1240.8 756H1246" stroke="#1a30e0" stroke-width="1.5"/>
<!-- zoom in -->
<circle cx="1268" cy="756" r="4.6" fill="#fff" stroke="#555" stroke-width="1.3"/><path d="M1271.4 759.6L1277 765" stroke="#111" stroke-width="2.4" stroke-linecap="round"/><path d="M1265.4 756H1270.6M1268 753.4V758.6" stroke="#1a30e0" stroke-width="1.5"/>
</svg>
</body></html>
